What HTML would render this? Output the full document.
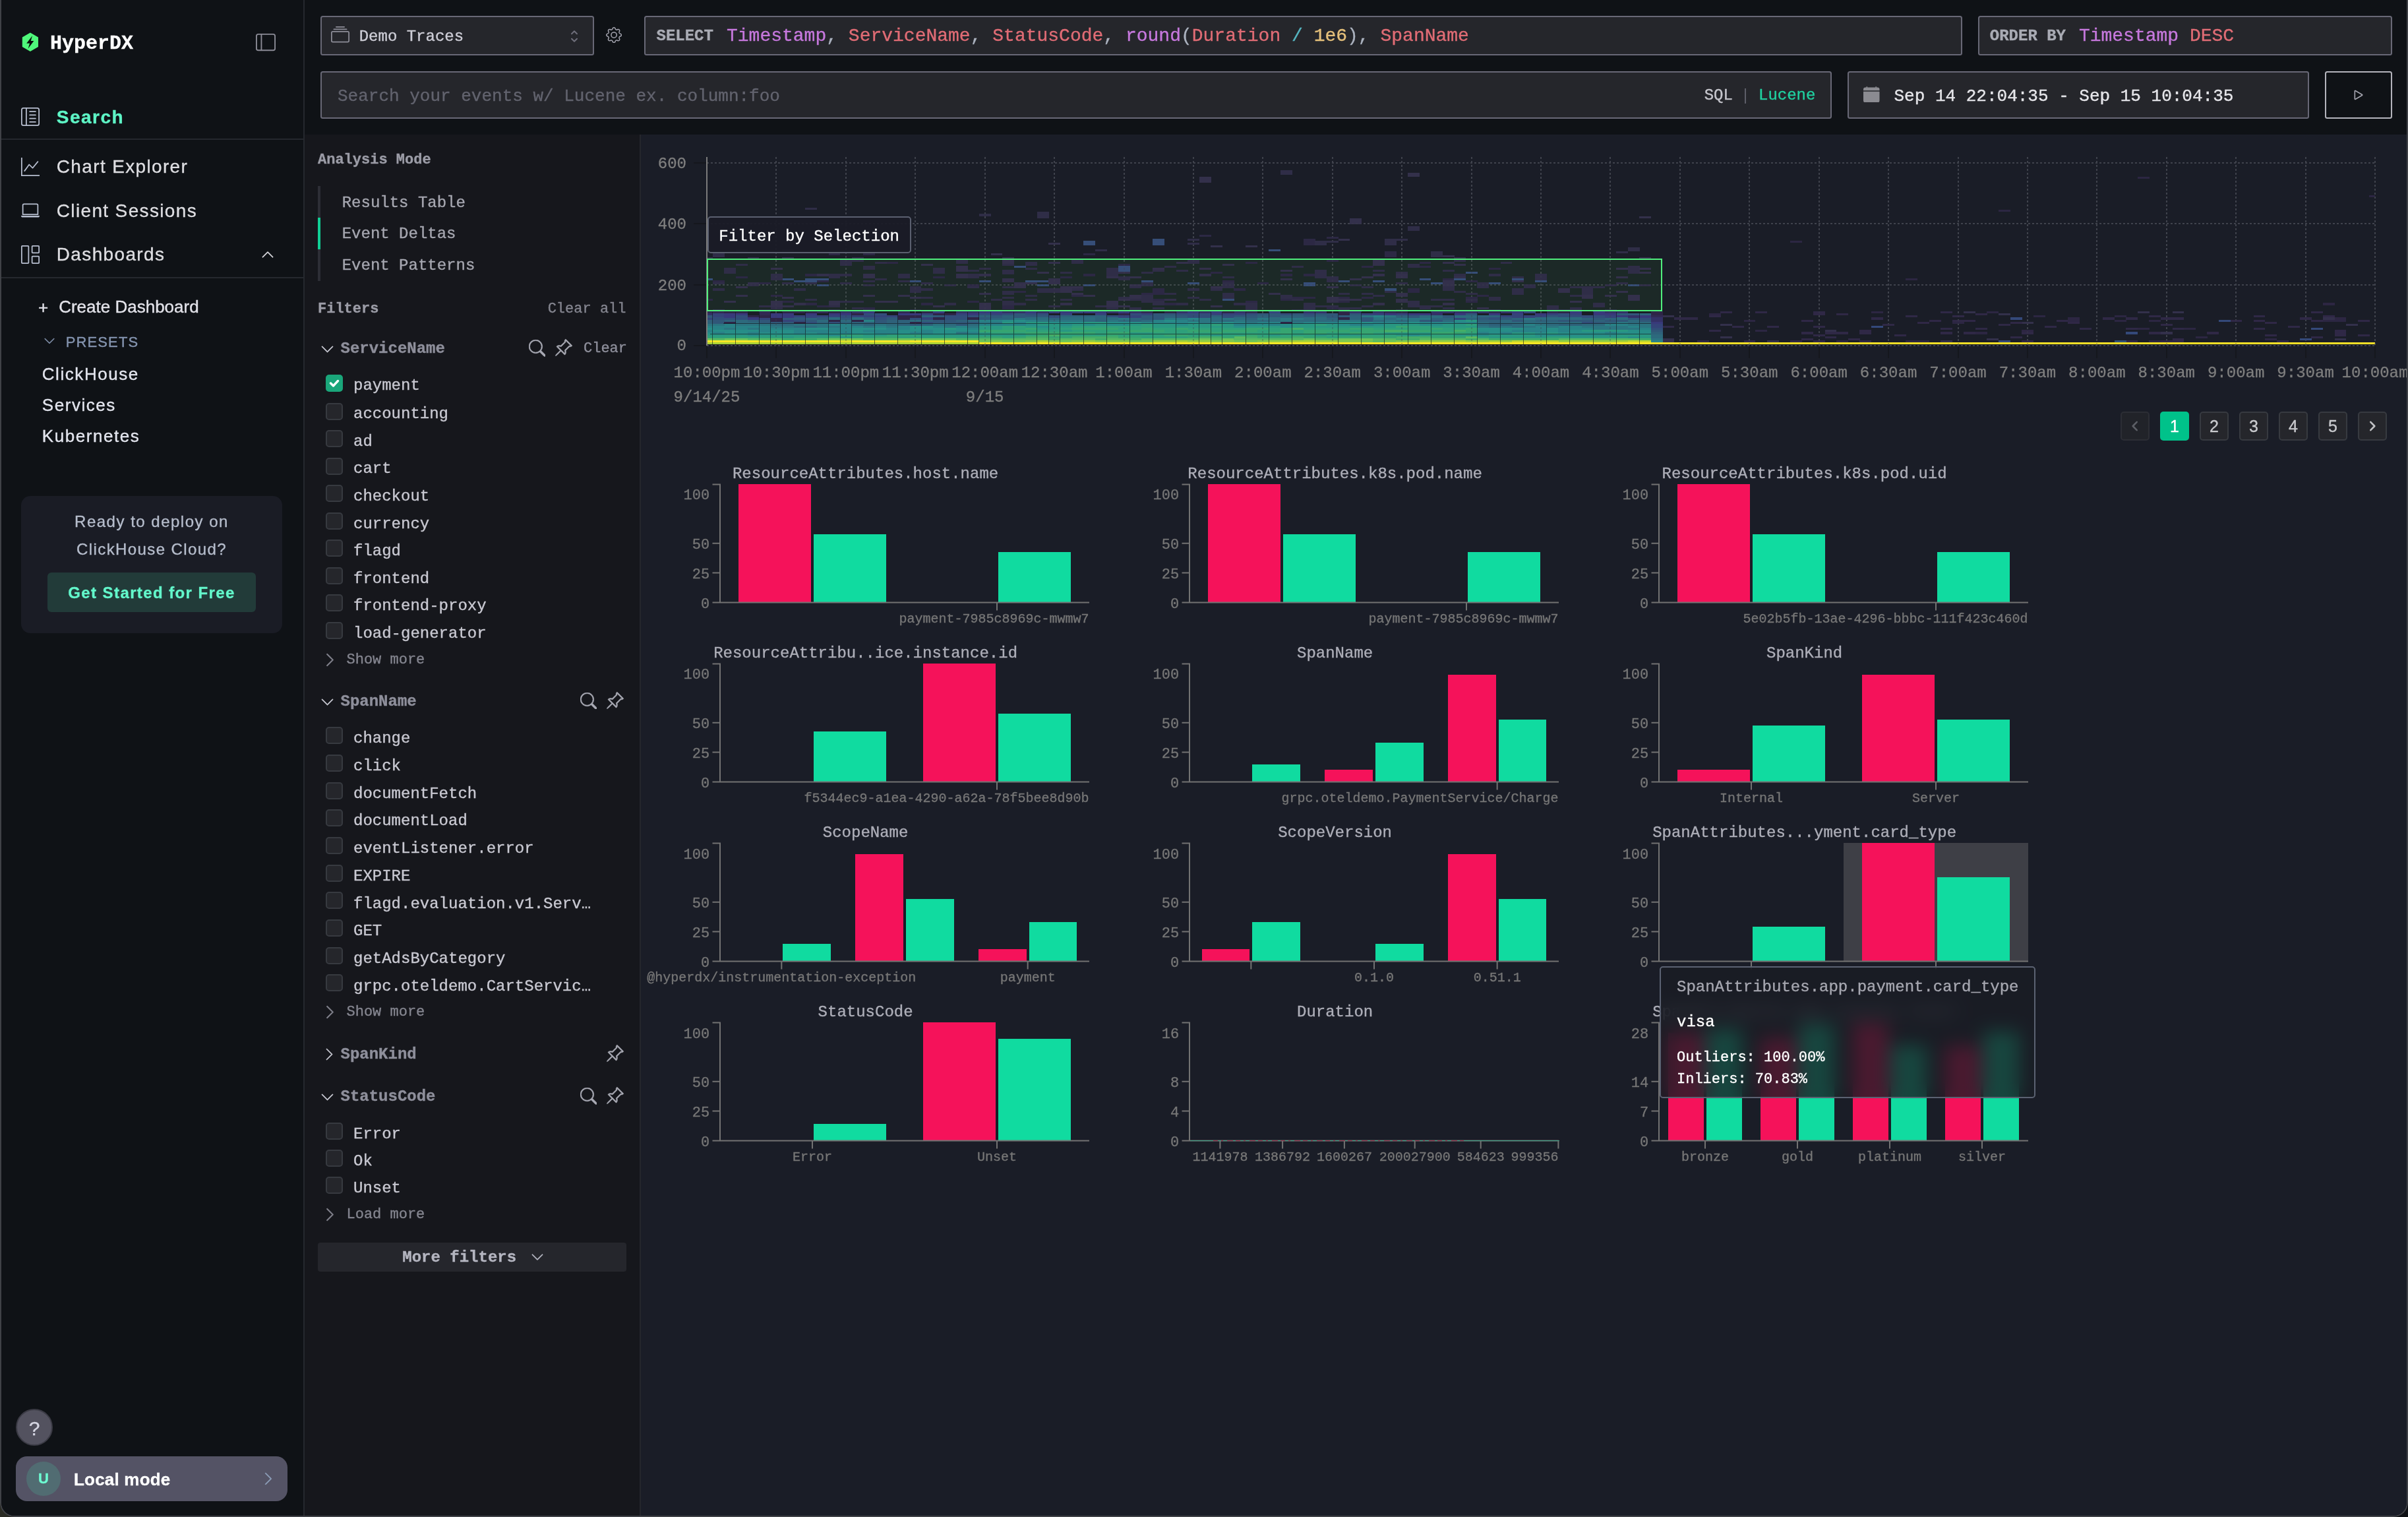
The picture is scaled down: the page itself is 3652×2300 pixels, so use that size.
<!DOCTYPE html>
<html lang="en"><head><meta charset="utf-8"><title>HyperDX - Search</title>
<style>
*{box-sizing:border-box;margin:0;padding:0}
html,body{width:3652px;height:2300px;overflow:hidden;background:#15161a}
#win{position:absolute;left:0;top:0;width:3652px;height:2300px;background:#0f1216;border:2px solid #404247;border-top:none;border-radius:0 0 22px 22px;overflow:hidden}
#in{position:absolute;left:-2px;top:0;width:3652px;height:2300px;will-change:transform}
.a{position:absolute;display:block}
.t{position:absolute;white-space:pre;line-height:1;-webkit-text-stroke:0.35px currentColor}
.m{font-family:"Liberation Mono","DejaVu Sans Mono",monospace}
.s{font-family:"Liberation Sans","DejaVu Sans",sans-serif}
.cb{position:absolute;width:26px;height:26px;border-radius:5px;background:#25262b;border:2px solid #373a40}
.box{position:absolute;background:#25262b;border:2px solid #686876;border-radius:3.5px}
</style></head>
<body><div style="position:absolute;left:0;top:2270px;width:30px;height:30px;background:#2a2b24"></div><div style="position:absolute;left:3622px;top:2270px;width:30px;height:30px;background:#0e1014"></div><div id="win"><div id="in">
<div class="a" style="left:2.00px;top:0.00px;width:458.00px;height:2300.00px;background:#0f1216;"></div>
<div class="a" style="left:460.00px;top:0.00px;width:2.00px;height:2300.00px;background:#25282e;"></div>
<div class="a" style="left:462.00px;top:0.00px;width:3188.00px;height:204.00px;background:#0f1216;"></div>
<div class="a" style="left:462.00px;top:204.00px;width:508.00px;height:2096.00px;background:#16171c;"></div>
<div class="a" style="left:970.00px;top:204.00px;width:2.00px;height:2096.00px;background:#25262c;"></div>
<div class="a" style="left:972.00px;top:204.00px;width:2678.00px;height:2096.00px;background:#1a1d27;"></div>
<svg class="a" style="left:32px;top:48px" width="28" height="32" viewBox="0 0 28 32"><polygon points="13.9,1.6 26,8.6 26,23 13.9,30 1.8,23 1.8,8.6" fill="#4ff87b"/><polygon points="17,6.2 8.2,17.8 13,17.8 10.6,25.8 19.4,14 14.8,14" fill="#0b0d0c"/></svg>
<div class="t m" style="top:50.62px;font-size:30px;color:#ffffff;left:76.00px;font-weight:700;">HyperDX</div>
<svg class="a" style="left:388.00px;top:47.00px;height:34px;" width="30" height="30" viewBox="0 -1 16 18" fill="#8b8b96" color="#8b8b96"><path d="M0 3a2 2 0 0 1 2-2h12a2 2 0 0 1 2 2v10a2 2 0 0 1-2 2H2a2 2 0 0 1-2-2V3zm5-1v12h9a1 1 0 0 0 1-1V3a1 1 0 0 0-1-1H5zM4 2H2a1 1 0 0 0-1 1v10a1 1 0 0 0 1 1h2V2z"/></svg>
<svg class="a" style="left:32.00px;top:163.00px;" width="28" height="28" viewBox="0 0 16 16" fill="#b8bfd0" color="#b8bfd0"><path d="M12.5 3a.5.5 0 0 1 0 1h-5a.5.5 0 0 1 0-1h5zm0 3a.5.5 0 0 1 0 1h-5a.5.5 0 0 1 0-1h5zm.5 3.5a.5.5 0 0 0-.5-.5h-5a.5.5 0 0 0 0 1h5a.5.5 0 0 0 .5-.5zm-.5 2.5a.5.5 0 0 1 0 1h-5a.5.5 0 0 1 0-1h5z"/><path d="M16 2a2 2 0 0 0-2-2H2a2 2 0 0 0-2 2v12a2 2 0 0 0 2 2h12a2 2 0 0 0 2-2V2zM4 1v14H2a1 1 0 0 1-1-1V2a1 1 0 0 1 1-1h2zm1 0h9a1 1 0 0 1 1 1v12a1 1 0 0 1-1 1H5V1z"/></svg>
<div class="t s" style="top:163.69px;font-size:28px;color:#5ef5c6;left:85.80px;font-weight:700;letter-spacing:1.5px;">Search</div>
<div class="a" style="left:2.00px;top:210.00px;width:458.00px;height:2.00px;background:#25282e;"></div>
<svg class="a" style="left:32.00px;top:239.00px;" width="28" height="28" viewBox="0 0 16 16" fill="#b8bfd0" color="#b8bfd0"><path fill-rule="evenodd" d="M0 0h1v15h15v1H0V0Zm14.817 3.113a.5.5 0 0 1 .07.704l-4.5 5.5a.5.5 0 0 1-.74.037L7.06 6.767l-3.656 5.027a.5.5 0 0 1-.808-.588l4-5.5a.5.5 0 0 1 .758-.06l2.609 2.61 4.15-5.073a.5.5 0 0 1 .704-.07Z"/></svg>
<div class="t s" style="top:239.19px;font-size:28px;color:#dedee2;left:85.80px;letter-spacing:1.35px;">Chart Explorer</div>
<svg class="a" style="left:32.00px;top:305.00px;" width="28" height="28" viewBox="0 0 16 16" fill="#b8bfd0" color="#b8bfd0"><path d="M13.5 3a.5.5 0 0 1 .5.5V11H2V3.5a.5.5 0 0 1 .5-.5h11zm-11-1A1.5 1.5 0 0 0 1 3.5V12h14V3.5A1.5 1.5 0 0 0 13.5 2h-11zM0 12.5h16a1.5 1.5 0 0 1-1.5 1.5h-13A1.5 1.5 0 0 1 0 12.5z"/></svg>
<div class="t s" style="top:305.69px;font-size:28px;color:#dedee2;left:85.80px;letter-spacing:1.35px;">Client Sessions</div>
<svg class="a" style="left:32.00px;top:372.00px;" width="28" height="28" viewBox="0 0 16 16" fill="#b8bfd0" color="#b8bfd0"><path d="M6 1H1v14h5V1zm9 0h-5v5h5V1zm0 9v5h-5v-5h5zM0 1a1 1 0 0 1 1-1h5a1 1 0 0 1 1 1v14a1 1 0 0 1-1 1H1a1 1 0 0 1-1-1V1zm9 0a1 1 0 0 1 1-1h5a1 1 0 0 1 1 1v5a1 1 0 0 1-1 1h-5a1 1 0 0 1-1-1V1zm1 8a1 1 0 0 0-1 1v5a1 1 0 0 0 1 1h5a1 1 0 0 0 1-1v-5a1 1 0 0 0-1-1h-5z"/></svg>
<div class="t s" style="top:372.09px;font-size:28px;color:#dedee2;left:85.80px;letter-spacing:1.35px;">Dashboards</div>
<svg class="a" style="left:396.00px;top:376.00px;" width="20" height="20" viewBox="0 0 16 16" fill="#d8d8de" color="#d8d8de"><path stroke="currentColor" stroke-width="0.5" fill-rule="evenodd" d="M7.646 4.646a.5.5 0 0 1 .708 0l6 6a.5.5 0 0 1-.708.708L8 5.707l-5.646 5.647a.5.5 0 0 1-.708-.708l6-6z"/></svg>
<div class="a" style="left:2.00px;top:420.00px;width:458.00px;height:2.00px;background:#25282e;"></div>
<div class="t s" style="top:452.99px;font-size:26px;color:#e3e3ea;left:58.00px;">+</div>
<div class="t s" style="top:452.49px;font-size:26px;color:#e3e3ea;left:89.20px;">Create Dashboard</div>
<svg class="a" style="left:66.00px;top:508.00px;" width="18" height="18" viewBox="0 0 16 16" fill="#8595b0" color="#8595b0"><path stroke="currentColor" stroke-width="0.5" fill-rule="evenodd" d="M1.646 4.646a.5.5 0 0 1 .708 0L8 10.293l5.646-5.647a.5.5 0 0 1 .708.708l-6 6a.5.5 0 0 1-.708 0l-6-6a.5.5 0 0 1 0-.708z"/></svg>
<div class="t s" style="top:507.67px;font-size:22px;color:#8595b0;left:99.80px;letter-spacing:1.1px;">PRESETS</div>
<div class="t s" style="top:554.19px;font-size:26px;color:#e3e5ee;left:63.80px;letter-spacing:1.55px;">ClickHouse</div>
<div class="t s" style="top:600.69px;font-size:26px;color:#e3e5ee;left:63.80px;letter-spacing:1.55px;">Services</div>
<div class="t s" style="top:647.59px;font-size:26px;color:#e3e5ee;left:63.80px;letter-spacing:1.55px;">Kubernetes</div>
<div class="a" style="left:32.00px;top:752.00px;width:396.00px;height:208.00px;background:#1a1c25;border-radius:14px;"></div>
<div class="t s" style="top:778.68px;font-size:24px;color:#b6bdcc;left:230.00px;transform:translateX(-50%);letter-spacing:1.5px;">Ready to deploy on</div>
<div class="t s" style="top:820.68px;font-size:24px;color:#b6bdcc;left:230.00px;transform:translateX(-50%);letter-spacing:1.4px;">ClickHouse Cloud?</div>
<div class="a" style="left:72.00px;top:868.00px;width:316.00px;height:60.00px;background:#223b39;border-radius:6px;"></div>
<div class="t s" style="top:886.98px;font-size:24px;color:#63f7cb;left:230.00px;transform:translateX(-50%);font-weight:700;letter-spacing:1.4px;">Get Started for Free</div>
<div class="a" style="left:24.00px;top:2136.00px;width:56.00px;height:56.00px;background:#53525f;border-radius:50%;border:2px solid #3b3b45;"></div>
<div class="t s" style="top:2151.10px;font-size:30px;color:#d5d6e2;left:52.00px;transform:translateX(-50%);">?</div>
<div class="a" style="left:24.00px;top:2208.00px;width:412.00px;height:68.00px;background:#545365;border-radius:17px;"></div>
<div class="a" style="left:40.00px;top:2216.00px;width:52.00px;height:52.00px;background:#516c72;border-radius:50%;"></div>
<div class="t s" style="top:2230.87px;font-size:22px;color:#6dfcd2;left:66.00px;transform:translateX(-50%);font-weight:700;">U</div>
<div class="t s" style="top:2230.29px;font-size:26px;color:#ffffff;left:112.00px;font-weight:700;letter-spacing:0.2px;">Local mode</div>
<svg class="a" style="left:396.00px;top:2231.00px;" width="22" height="22" viewBox="0 0 16 16" fill="#8a9bb5" color="#8a9bb5"><path stroke="currentColor" stroke-width="0.5" fill-rule="evenodd" d="M4.646 1.646a.5.5 0 0 1 .708 0l6 6a.5.5 0 0 1 0 .708l-6 6a.5.5 0 0 1-.708-.708L10.293 8 4.646 2.354a.5.5 0 0 1 0-.708z"/></svg>
<div class="box" style="left:486px;top:24px;width:415px;height:60px"></div>
<svg class="a" style="left:502.00px;top:39.00px;" width="28" height="28" viewBox="0 0 16 16" fill="#8d8d98" color="#8d8d98"><path d="M2.5 3.5a.5.5 0 0 1 0-1h11a.5.5 0 0 1 0 1h-11zm2-2a.5.5 0 0 1 0-1h7a.5.5 0 0 1 0 1h-7zM0 13a1.5 1.5 0 0 0 1.5 1.5h13A1.5 1.5 0 0 0 16 13V6a1.5 1.5 0 0 0-1.5-1.5h-13A1.5 1.5 0 0 0 0 6v7zm1.5.5A.5.5 0 0 1 1 13V6a.5.5 0 0 1 .5-.5h13a.5.5 0 0 1 .5.5v7a.5.5 0 0 1-.5.5h-13z"/></svg>
<div class="t m" style="top:43.91px;font-size:24px;color:#cdcdd6;left:544.70px;">Demo Traces</div>
<svg class="a" style="left:862px;top:42px" width="18" height="26" viewBox="0 0 18 26" fill="none" stroke="#6e6e7a" stroke-width="2" stroke-linecap="round" stroke-linejoin="round"><polyline points="5,9.2 9,5.2 13,9.2"/><polyline points="5,16.8 9,20.8 13,16.8"/></svg>
<svg class="a" style="left:919.00px;top:41.30px;" width="24.2" height="24.2" viewBox="0 0 16 16" fill="#a2a2ad" color="#a2a2ad"><path d="M8 4.754a3.246 3.246 0 1 0 0 6.492 3.246 3.246 0 0 0 0-6.492zM5.754 8a2.246 2.246 0 1 1 4.492 0 2.246 2.246 0 0 1-4.492 0z"/><path d="M9.796 1.343c-.527-1.79-3.065-1.79-3.592 0l-.094.319a.873.873 0 0 1-1.255.52l-.292-.16c-1.64-.892-3.433.902-2.54 2.541l.159.292a.873.873 0 0 1-.52 1.255l-.319.094c-1.79.527-1.79 3.065 0 3.592l.319.094a.873.873 0 0 1 .52 1.255l-.16.292c-.892 1.64.901 3.434 2.541 2.54l.292-.159a.873.873 0 0 1 1.255.52l.094.319c.527 1.79 3.065 1.79 3.592 0l.094-.319a.873.873 0 0 1 1.255-.52l.292.16c1.64.893 3.434-.902 2.54-2.541l-.159-.292a.873.873 0 0 1 .52-1.255l.319-.094c1.79-.527 1.79-3.065 0-3.592l-.319-.094a.873.873 0 0 1-.52-1.255l.16-.292c.893-1.64-.902-3.433-2.541-2.54l-.292.159a.873.873 0 0 1-1.255-.52l-.094-.319zm-2.633.283c.246-.835 1.428-.835 1.674 0l.094.319a1.873 1.873 0 0 0 2.693 1.115l.291-.16c.764-.415 1.6.42 1.184 1.185l-.159.292a1.873 1.873 0 0 0 1.116 2.692l.318.094c.835.246.835 1.428 0 1.674l-.319.094a1.873 1.873 0 0 0-1.115 2.693l.16.291c.415.764-.42 1.6-1.185 1.184l-.291-.159a1.873 1.873 0 0 0-2.693 1.116l-.094.318c-.246.835-1.428.835-1.674 0l-.094-.319a1.873 1.873 0 0 0-2.692-1.115l-.292.16c-.764.415-1.6-.42-1.184-1.185l.159-.291A1.873 1.873 0 0 0 1.945 8.93l-.319-.094c-.835-.246-.835-1.428 0-1.674l.319-.094A1.873 1.873 0 0 0 3.06 4.377l-.16-.292c-.415-.764.42-1.6 1.185-1.184l.292.159a1.873 1.873 0 0 0 2.692-1.115l.094-.319z"/></svg>
<div class="box" style="left:977px;top:24px;width:1999px;height:60px"></div>
<div class="t m" style="top:43.11px;font-size:24px;color:#a9abb4;left:995.50px;font-weight:700;">SELECT</div>
<div class="t m" style="top:41.05px;font-size:28px;color:#abb2bf;left:1102.00px;"><span style="color:#c678dd">Timestamp</span><span style="color:#abb2bf">, </span><span style="color:#e06c75">ServiceName</span><span style="color:#abb2bf">, </span><span style="color:#e06c75">StatusCode</span><span style="color:#abb2bf">, </span><span style="color:#c678dd">round</span><span style="color:#abb2bf">(</span><span style="color:#e06c75">Duration</span> <span style="color:#56b6c2">/</span> <span style="color:#e5c07b">1e6</span><span style="color:#abb2bf">), </span><span style="color:#e06c75">SpanName</span></div>
<div class="box" style="left:3000px;top:24px;width:628px;height:60px"></div>
<div class="t m" style="top:43.11px;font-size:24px;color:#a9abb4;left:3017.80px;font-weight:700;">ORDER BY</div>
<div class="t m" style="top:41.05px;font-size:28px;color:#abb2bf;left:3152.90px;"><span style="color:#c678dd">Timestamp</span> <span style="color:#e06c75">DESC</span></div>
<div class="box" style="left:486px;top:108px;width:2292px;height:72px"></div>
<div class="t m" style="top:133.08px;font-size:26px;color:#62636e;left:512.00px;">Search your events w/ Lucene ex. column:foo</div>
<div class="t m" style="top:132.51px;font-size:24px;color:#c6c6cd;left:2584.70px;">SQL</div>
<div class="a" style="left:2645.50px;top:134.00px;width:2.00px;height:23.00px;background:#5d5e68;"></div>
<div class="t m" style="top:132.51px;font-size:24px;color:#20d1a0;left:2667.00px;">Lucene</div>
<div class="box" style="left:2802px;top:108px;width:700px;height:72px"></div>
<svg class="a" style="left:2826.00px;top:130.50px;" width="24.5" height="24.5" viewBox="0 0 16 16" fill="#8b8b91" color="#8b8b91"><path d="M3.5 0a.5.5 0 0 1 .5.5V1h8V.5a.5.5 0 0 1 1 0V1h1a2 2 0 0 1 2 2v11a2 2 0 0 1-2 2H2a2 2 0 0 1-2-2V5h16V4H0V3a2 2 0 0 1 2-2h1V.5a.5.5 0 0 1 .5-.5z"/></svg>
<div class="t m" style="top:132.78px;font-size:26px;color:#e6e6ea;left:2872.50px;">Sep 14 22:04:35 - Sep 15 10:04:35</div>
<div class="box" style="left:3526px;top:108px;width:102px;height:72px;background:#0f1216;border-color:#b4b4bc"></div>
<svg class="a" style="left:3564.00px;top:131.00px;" width="26" height="26" viewBox="0 0 16 16" fill="#a4a4ae" color="#a4a4ae"><path d="M10.804 8 5 4.633v6.734L10.804 8zm.792-.696a.802.802 0 0 1 0 1.392l-6.363 3.692C4.713 12.69 4 12.345 4 11.692V4.308c0-.653.713-.998 1.233-.696l6.363 3.692z"/></svg>
<div class="t m" style="top:231.65px;font-size:22px;color:#9b9ca6;left:482.00px;font-weight:700;">Analysis Mode</div>
<div class="a" style="left:482.00px;top:282.00px;width:4.00px;height:144.00px;background:#2d2e36;"></div>
<div class="a" style="left:482.00px;top:330.00px;width:4.00px;height:48.00px;background:#10cf95;"></div>
<div class="t m" style="top:295.71px;font-size:24px;color:#a6a7b0;left:518.70px;">Results Table</div>
<div class="t m" style="top:342.81px;font-size:24px;color:#a6a7b0;left:518.70px;">Event Deltas</div>
<div class="t m" style="top:390.71px;font-size:24px;color:#a6a7b0;left:518.70px;">Event Patterns</div>
<div class="t m" style="top:457.85px;font-size:22px;color:#9b9ca6;left:482.00px;font-weight:700;">Filters</div>
<div class="t m" style="top:457.85px;font-size:22px;color:#84858f;right:2702.50px;">Clear all</div>
<svg class="a" style="left:486.20px;top:519.20px;" width="21" height="21" viewBox="0 0 16 16" fill="#c2c3cc" color="#c2c3cc"><path stroke="currentColor" stroke-width="0.5" fill-rule="evenodd" d="M1.646 4.646a.5.5 0 0 1 .708 0L8 10.293l5.646-5.647a.5.5 0 0 1 .708.708l-6 6a.5.5 0 0 1-.708 0l-6-6a.5.5 0 0 1 0-.708z"/></svg>
<div class="t m" style="top:517.21px;font-size:24px;color:#8e8f9b;left:516.50px;font-weight:700;">ServiceName</div>
<div class="t m" style="top:517.85px;font-size:22px;color:#8e8f9b;left:885.00px;">Clear</div>
<svg class="a" style="left:801.50px;top:515.40px;" width="25.5" height="25.5" viewBox="0 0 16 16" fill="#a9aab4" color="#a9aab4"><path stroke="currentColor" stroke-width="0.35" d="M11.742 10.344a6.5 6.5 0 1 0-1.397 1.398h-.001c.03.04.062.078.098.115l3.85 3.85a1 1 0 0 0 1.415-1.414l-3.85-3.85a1.007 1.007 0 0 0-.115-.1zM12 6.5a5.5 5.5 0 1 1-11 0 5.5 5.5 0 0 1 11 0z"/></svg>
<svg class="a" style="left:840.00px;top:513.00px;" width="29" height="29" viewBox="0 0 16 16" fill="#a9aab4" color="#a9aab4"><path stroke="currentColor" stroke-width="0.25" d="M9.828.722a.5.5 0 0 1 .354.146l4.95 4.95a.5.5 0 0 1 0 .707c-.48.48-1.072.588-1.503.588-.177 0-.335-.018-.46-.039l-3.134 3.134a5.927 5.927 0 0 1 .16 1.013c.046.702-.032 1.687-.72 2.375a.5.5 0 0 1-.707 0l-2.829-2.828-3.182 3.182c-.195.195-1.219.902-1.414.707-.195-.195.512-1.22.707-1.414l3.182-3.182-2.828-2.829a.5.5 0 0 1 0-.707c.688-.688 1.673-.767 2.375-.72a5.922 5.922 0 0 1 1.013.16l3.134-3.133a2.772 2.772 0 0 1-.04-.461c0-.43.108-1.022.589-1.503a.5.5 0 0 1 .353-.146zm.122 2.112v-.002.002zm0-.002v.002a.5.5 0 0 1-.122.51L6.293 6.878a.5.5 0 0 1-.511.12H5.78l-.014-.004a4.507 4.507 0 0 0-.288-.076 4.922 4.922 0 0 0-.765-.116c-.422-.028-.836.008-1.175.15l5.51 5.509c.141-.34.177-.753.149-1.175a4.924 4.924 0 0 0-.192-1.054l-.004-.013v-.001a.5.5 0 0 1 .12-.512l3.536-3.535a.5.5 0 0 1 .532-.115l.096.022c.087.017.208.034.344.034.114 0 .23-.011.343-.04L9.927 2.028c-.029.113-.04.23-.04.343a1.779 1.779 0 0 0 .062.46z"/></svg>
<div class="cb" style="left:494px;top:568.00px;background:#1aa67a;border-color:#1aa67a"><svg class="a" style="left:2px;top:3px" width="18" height="16" viewBox="0 0 18 16" fill="none" stroke="#fff" stroke-width="3.4" stroke-linecap="round" stroke-linejoin="round"><polyline points="3.5,8 7.5,12 14.5,4.5"/></svg></div>
<div class="t m" style="top:572.91px;font-size:24px;color:#c9c9d2;left:536.00px;">payment</div>
<div class="cb" style="left:494px;top:610.60px"></div>
<div class="t m" style="top:616.31px;font-size:24px;color:#c9c9d2;left:536.00px;">accounting</div>
<div class="cb" style="left:494px;top:652.15px"></div>
<div class="t m" style="top:657.88px;font-size:24px;color:#c9c9d2;left:536.00px;">ad</div>
<div class="cb" style="left:494px;top:693.70px"></div>
<div class="t m" style="top:699.45px;font-size:24px;color:#c9c9d2;left:536.00px;">cart</div>
<div class="cb" style="left:494px;top:735.25px"></div>
<div class="t m" style="top:741.02px;font-size:24px;color:#c9c9d2;left:536.00px;">checkout</div>
<div class="cb" style="left:494px;top:776.80px"></div>
<div class="t m" style="top:782.59px;font-size:24px;color:#c9c9d2;left:536.00px;">currency</div>
<div class="cb" style="left:494px;top:818.35px"></div>
<div class="t m" style="top:824.16px;font-size:24px;color:#c9c9d2;left:536.00px;">flagd</div>
<div class="cb" style="left:494px;top:859.90px"></div>
<div class="t m" style="top:865.73px;font-size:24px;color:#c9c9d2;left:536.00px;">frontend</div>
<div class="cb" style="left:494px;top:901.45px"></div>
<div class="t m" style="top:907.30px;font-size:24px;color:#c9c9d2;left:536.00px;">frontend-proxy</div>
<div class="cb" style="left:494px;top:943.00px"></div>
<div class="t m" style="top:948.87px;font-size:24px;color:#c9c9d2;left:536.00px;">load-generator</div>
<svg class="a" style="left:489.00px;top:989.00px;" width="23" height="23" viewBox="0 0 16 16" fill="#84858f" color="#84858f"><path stroke="currentColor" stroke-width="0.5" fill-rule="evenodd" d="M4.646 1.646a.5.5 0 0 1 .708 0l6 6a.5.5 0 0 1 0 .708l-6 6a.5.5 0 0 1-.708-.708L10.293 8 4.646 2.354a.5.5 0 0 1 0-.708z"/></svg>
<div class="t m" style="top:989.85px;font-size:22px;color:#84858f;left:525.50px;">Show more</div>
<svg class="a" style="left:486.20px;top:1053.70px;" width="21" height="21" viewBox="0 0 16 16" fill="#c2c3cc" color="#c2c3cc"><path stroke="currentColor" stroke-width="0.5" fill-rule="evenodd" d="M1.646 4.646a.5.5 0 0 1 .708 0L8 10.293l5.646-5.647a.5.5 0 0 1 .708.708l-6 6a.5.5 0 0 1-.708 0l-6-6a.5.5 0 0 1 0-.708z"/></svg>
<div class="t m" style="top:1051.71px;font-size:24px;color:#8e8f9b;left:516.50px;font-weight:700;">SpanName</div>
<svg class="a" style="left:879.50px;top:1049.90px;" width="25.5" height="25.5" viewBox="0 0 16 16" fill="#a9aab4" color="#a9aab4"><path stroke="currentColor" stroke-width="0.35" d="M11.742 10.344a6.5 6.5 0 1 0-1.397 1.398h-.001c.03.04.062.078.098.115l3.85 3.85a1 1 0 0 0 1.415-1.414l-3.85-3.85a1.007 1.007 0 0 0-.115-.1zM12 6.5a5.5 5.5 0 1 1-11 0 5.5 5.5 0 0 1 11 0z"/></svg>
<svg class="a" style="left:918.00px;top:1047.50px;" width="29" height="29" viewBox="0 0 16 16" fill="#a9aab4" color="#a9aab4"><path stroke="currentColor" stroke-width="0.25" d="M9.828.722a.5.5 0 0 1 .354.146l4.95 4.95a.5.5 0 0 1 0 .707c-.48.48-1.072.588-1.503.588-.177 0-.335-.018-.46-.039l-3.134 3.134a5.927 5.927 0 0 1 .16 1.013c.046.702-.032 1.687-.72 2.375a.5.5 0 0 1-.707 0l-2.829-2.828-3.182 3.182c-.195.195-1.219.902-1.414.707-.195-.195.512-1.22.707-1.414l3.182-3.182-2.828-2.829a.5.5 0 0 1 0-.707c.688-.688 1.673-.767 2.375-.72a5.922 5.922 0 0 1 1.013.16l3.134-3.133a2.772 2.772 0 0 1-.04-.461c0-.43.108-1.022.589-1.503a.5.5 0 0 1 .353-.146zm.122 2.112v-.002.002zm0-.002v.002a.5.5 0 0 1-.122.51L6.293 6.878a.5.5 0 0 1-.511.12H5.78l-.014-.004a4.507 4.507 0 0 0-.288-.076 4.922 4.922 0 0 0-.765-.116c-.422-.028-.836.008-1.175.15l5.51 5.509c.141-.34.177-.753.149-1.175a4.924 4.924 0 0 0-.192-1.054l-.004-.013v-.001a.5.5 0 0 1 .12-.512l3.536-3.535a.5.5 0 0 1 .532-.115l.096.022c.087.017.208.034.344.034.114 0 .23-.011.343-.04L9.927 2.028c-.029.113-.04.23-.04.343a1.779 1.779 0 0 0 .062.46z"/></svg>
<div class="cb" style="left:494px;top:1102.20px"></div>
<div class="t m" style="top:1108.31px;font-size:24px;color:#c9c9d2;left:536.00px;">change</div>
<div class="cb" style="left:494px;top:1143.87px"></div>
<div class="t m" style="top:1150.01px;font-size:24px;color:#c9c9d2;left:536.00px;">click</div>
<div class="cb" style="left:494px;top:1185.54px"></div>
<div class="t m" style="top:1191.71px;font-size:24px;color:#c9c9d2;left:536.00px;">documentFetch</div>
<div class="cb" style="left:494px;top:1227.21px"></div>
<div class="t m" style="top:1233.41px;font-size:24px;color:#c9c9d2;left:536.00px;">documentLoad</div>
<div class="cb" style="left:494px;top:1268.88px"></div>
<div class="t m" style="top:1275.11px;font-size:24px;color:#c9c9d2;left:536.00px;">eventListener.error</div>
<div class="cb" style="left:494px;top:1310.55px"></div>
<div class="t m" style="top:1316.81px;font-size:24px;color:#c9c9d2;left:536.00px;">EXPIRE</div>
<div class="cb" style="left:494px;top:1352.22px"></div>
<div class="t m" style="top:1358.51px;font-size:24px;color:#c9c9d2;left:536.00px;">flagd.evaluation.v1.Serv…</div>
<div class="cb" style="left:494px;top:1393.89px"></div>
<div class="t m" style="top:1400.21px;font-size:24px;color:#c9c9d2;left:536.00px;">GET</div>
<div class="cb" style="left:494px;top:1435.56px"></div>
<div class="t m" style="top:1441.91px;font-size:24px;color:#c9c9d2;left:536.00px;">getAdsByCategory</div>
<div class="cb" style="left:494px;top:1477.23px"></div>
<div class="t m" style="top:1483.61px;font-size:24px;color:#c9c9d2;left:536.00px;">grpc.oteldemo.CartServic…</div>
<svg class="a" style="left:489.00px;top:1523.10px;" width="23" height="23" viewBox="0 0 16 16" fill="#84858f" color="#84858f"><path stroke="currentColor" stroke-width="0.5" fill-rule="evenodd" d="M4.646 1.646a.5.5 0 0 1 .708 0l6 6a.5.5 0 0 1 0 .708l-6 6a.5.5 0 0 1-.708-.708L10.293 8 4.646 2.354a.5.5 0 0 1 0-.708z"/></svg>
<div class="t m" style="top:1523.95px;font-size:22px;color:#84858f;left:525.50px;">Show more</div>
<svg class="a" style="left:488.50px;top:1588.40px;" width="21" height="21" viewBox="0 0 16 16" fill="#c2c3cc" color="#c2c3cc"><path stroke="currentColor" stroke-width="0.5" fill-rule="evenodd" d="M4.646 1.646a.5.5 0 0 1 .708 0l6 6a.5.5 0 0 1 0 .708l-6 6a.5.5 0 0 1-.708-.708L10.293 8 4.646 2.354a.5.5 0 0 1 0-.708z"/></svg>
<div class="t m" style="top:1586.71px;font-size:24px;color:#8e8f9b;left:516.50px;font-weight:700;">SpanKind</div>
<svg class="a" style="left:918.00px;top:1582.50px;" width="29" height="29" viewBox="0 0 16 16" fill="#a9aab4" color="#a9aab4"><path stroke="currentColor" stroke-width="0.25" d="M9.828.722a.5.5 0 0 1 .354.146l4.95 4.95a.5.5 0 0 1 0 .707c-.48.48-1.072.588-1.503.588-.177 0-.335-.018-.46-.039l-3.134 3.134a5.927 5.927 0 0 1 .16 1.013c.046.702-.032 1.687-.72 2.375a.5.5 0 0 1-.707 0l-2.829-2.828-3.182 3.182c-.195.195-1.219.902-1.414.707-.195-.195.512-1.22.707-1.414l3.182-3.182-2.828-2.829a.5.5 0 0 1 0-.707c.688-.688 1.673-.767 2.375-.72a5.922 5.922 0 0 1 1.013.16l3.134-3.133a2.772 2.772 0 0 1-.04-.461c0-.43.108-1.022.589-1.503a.5.5 0 0 1 .353-.146zm.122 2.112v-.002.002zm0-.002v.002a.5.5 0 0 1-.122.51L6.293 6.878a.5.5 0 0 1-.511.12H5.78l-.014-.004a4.507 4.507 0 0 0-.288-.076 4.922 4.922 0 0 0-.765-.116c-.422-.028-.836.008-1.175.15l5.51 5.509c.141-.34.177-.753.149-1.175a4.924 4.924 0 0 0-.192-1.054l-.004-.013v-.001a.5.5 0 0 1 .12-.512l3.536-3.535a.5.5 0 0 1 .532-.115l.096.022c.087.017.208.034.344.034.114 0 .23-.011.343-.04L9.927 2.028c-.029.113-.04.23-.04.343a1.779 1.779 0 0 0 .062.46z"/></svg>
<svg class="a" style="left:486.20px;top:1653.00px;" width="21" height="21" viewBox="0 0 16 16" fill="#c2c3cc" color="#c2c3cc"><path stroke="currentColor" stroke-width="0.5" fill-rule="evenodd" d="M1.646 4.646a.5.5 0 0 1 .708 0L8 10.293l5.646-5.647a.5.5 0 0 1 .708.708l-6 6a.5.5 0 0 1-.708 0l-6-6a.5.5 0 0 1 0-.708z"/></svg>
<div class="t m" style="top:1651.01px;font-size:24px;color:#8e8f9b;left:516.50px;font-weight:700;">StatusCode</div>
<svg class="a" style="left:879.50px;top:1649.20px;" width="25.5" height="25.5" viewBox="0 0 16 16" fill="#a9aab4" color="#a9aab4"><path stroke="currentColor" stroke-width="0.35" d="M11.742 10.344a6.5 6.5 0 1 0-1.397 1.398h-.001c.03.04.062.078.098.115l3.85 3.85a1 1 0 0 0 1.415-1.414l-3.85-3.85a1.007 1.007 0 0 0-.115-.1zM12 6.5a5.5 5.5 0 1 1-11 0 5.5 5.5 0 0 1 11 0z"/></svg>
<svg class="a" style="left:918.00px;top:1646.80px;" width="29" height="29" viewBox="0 0 16 16" fill="#a9aab4" color="#a9aab4"><path stroke="currentColor" stroke-width="0.25" d="M9.828.722a.5.5 0 0 1 .354.146l4.95 4.95a.5.5 0 0 1 0 .707c-.48.48-1.072.588-1.503.588-.177 0-.335-.018-.46-.039l-3.134 3.134a5.927 5.927 0 0 1 .16 1.013c.046.702-.032 1.687-.72 2.375a.5.5 0 0 1-.707 0l-2.829-2.828-3.182 3.182c-.195.195-1.219.902-1.414.707-.195-.195.512-1.22.707-1.414l3.182-3.182-2.828-2.829a.5.5 0 0 1 0-.707c.688-.688 1.673-.767 2.375-.72a5.922 5.922 0 0 1 1.013.16l3.134-3.133a2.772 2.772 0 0 1-.04-.461c0-.43.108-1.022.589-1.503a.5.5 0 0 1 .353-.146zm.122 2.112v-.002.002zm0-.002v.002a.5.5 0 0 1-.122.51L6.293 6.878a.5.5 0 0 1-.511.12H5.78l-.014-.004a4.507 4.507 0 0 0-.288-.076 4.922 4.922 0 0 0-.765-.116c-.422-.028-.836.008-1.175.15l5.51 5.509c.141-.34.177-.753.149-1.175a4.924 4.924 0 0 0-.192-1.054l-.004-.013v-.001a.5.5 0 0 1 .12-.512l3.536-3.535a.5.5 0 0 1 .532-.115l.096.022c.087.017.208.034.344.034.114 0 .23-.011.343-.04L9.927 2.028c-.029.113-.04.23-.04.343a1.779 1.779 0 0 0 .062.46z"/></svg>
<div class="cb" style="left:494px;top:1701.60px"></div>
<div class="t m" style="top:1707.71px;font-size:24px;color:#c9c9d2;left:536.00px;">Error</div>
<div class="cb" style="left:494px;top:1742.95px"></div>
<div class="t m" style="top:1749.06px;font-size:24px;color:#c9c9d2;left:536.00px;">Ok</div>
<div class="cb" style="left:494px;top:1784.30px"></div>
<div class="t m" style="top:1790.41px;font-size:24px;color:#c9c9d2;left:536.00px;">Unset</div>
<svg class="a" style="left:489.00px;top:1829.70px;" width="23" height="23" viewBox="0 0 16 16" fill="#84858f" color="#84858f"><path stroke="currentColor" stroke-width="0.5" fill-rule="evenodd" d="M4.646 1.646a.5.5 0 0 1 .708 0l6 6a.5.5 0 0 1 0 .708l-6 6a.5.5 0 0 1-.708-.708L10.293 8 4.646 2.354a.5.5 0 0 1 0-.708z"/></svg>
<div class="t m" style="top:1830.55px;font-size:22px;color:#84858f;left:525.50px;">Load more</div>
<div class="a" style="left:482.00px;top:1884.00px;width:468.00px;height:44.00px;background:#25262c;border-radius:4px;"></div>
<div class="t m" style="top:1894.61px;font-size:24px;color:#b4b5c0;left:610.30px;font-weight:700;">More filters</div>
<svg class="a" style="left:805.00px;top:1896.00px;" width="20" height="20" viewBox="0 0 16 16" fill="#b4b5c0" color="#b4b5c0"><path stroke="currentColor" stroke-width="0.5" fill-rule="evenodd" d="M1.646 4.646a.5.5 0 0 1 .708 0L8 10.293l5.646-5.647a.5.5 0 0 1 .708.708l-6 6a.5.5 0 0 1-.708 0l-6-6a.5.5 0 0 1 0-.708z"/></svg>
<svg class="a" style="left:972px;top:204px" width="2678" height="470" viewBox="972 204 2678 470" shape-rendering="crispEdges"><path d="M1072.0 246.7H3602.0M1072.0 338.7H3602.0M1072.0 431.7H3602.0M1072.0 524.0H3602.0M1177.4 238V523M1282.8 238V523M1388.3 238V523M1493.7 238V523M1599.1 238V523M1704.5 238V523M1809.9 238V523M1915.3 238V523M2020.8 238V523M2126.2 238V523M2231.6 238V523M2337.0 238V523M2442.4 238V523M2547.8 238V523M2653.3 238V523M2758.7 238V523M2864.1 238V523M2969.5 238V523M3074.9 238V523M3180.3 238V523M3285.8 238V523M3391.2 238V523M3496.6 238V523M3602.0 238V523" stroke="#40434c" stroke-width="2" stroke-dasharray="3 3" fill="none"/><rect x="1073" y="393" width="1446.5" height="78" fill="#3ce632" fill-opacity="0.06"/><path fill="#abd235" d="M1073 519.1h8.1v3.3h-8.1zM1080.8 519.1h17.9v3.3h-17.9zM1098.4 519.1h17.9v3.3h-17.9zM1115.9 519.1h17.9v3.3h-17.9zM1133.5 519.1h17.9v3.3h-17.9zM1151.1 519.1h17.9v3.3h-17.9zM1168.6 519.1h17.9v3.3h-17.9zM1186.2 519.1h17.9v3.3h-17.9zM1203.8 519.1h17.9v3.3h-17.9zM1221.3 519.1h17.9v3.3h-17.9zM1238.9 519.1h17.9v3.3h-17.9zM1256.5 519.1h17.9v3.3h-17.9zM1274 519.1h17.9v3.3h-17.9zM1291.6 519.1h17.9v3.3h-17.9zM1309.2 519.1h17.9v3.3h-17.9zM1326.8 519.1h17.9v3.3h-17.9zM1344.3 519.1h17.9v3.3h-17.9zM1361.9 519.1h17.9v3.3h-17.9zM1379.5 519.1h17.9v3.3h-17.9zM1397 519.1h17.9v3.3h-17.9zM1414.6 519.1h17.9v3.3h-17.9zM1432.2 519.1h17.9v3.3h-17.9zM1449.7 519.1h17.9v3.3h-17.9zM1467.3 519.1h17.9v3.3h-17.9zM1572.7 515.9h17.9v3.3h-17.9zM1783.6 515.9h17.9v3.3h-17.9zM1959.3 515.9h17.9v3.3h-17.9zM1976.8 515.9h17.9v3.3h-17.9zM2205.2 515.9h17.9v3.3h-17.9zM2257.9 515.9h17.9v3.3h-17.9zM2380.9 515.9h17.9v3.3h-17.9zM2398.5 515.9h17.9v3.3h-17.9zM2451.2 515.9h17.9v3.3h-17.9z"/><path fill="#fde725" d="M1073 515.9h8.1v3.3h-8.1zM1080.8 515.9h17.9v3.3h-17.9zM1098.4 515.9h17.9v3.3h-17.9zM1115.9 515.9h17.9v3.3h-17.9zM1133.5 515.9h17.9v3.3h-17.9zM1151.1 515.9h17.9v3.3h-17.9zM1168.6 515.9h17.9v3.3h-17.9zM1186.2 515.9h17.9v3.3h-17.9zM1203.8 515.9h17.9v3.3h-17.9zM1221.3 515.9h17.9v3.3h-17.9zM1238.9 515.9h17.9v3.3h-17.9zM1256.5 515.9h17.9v3.3h-17.9zM1291.6 515.9h17.9v3.3h-17.9zM1309.2 515.9h17.9v3.3h-17.9zM1326.8 515.9h17.9v3.3h-17.9zM1344.3 515.9h17.9v3.3h-17.9zM1379.5 515.9h17.9v3.3h-17.9zM1397 515.9h17.9v3.3h-17.9zM1414.6 515.9h17.9v3.3h-17.9zM1432.2 515.9h17.9v3.3h-17.9zM1449.7 515.9h17.9v3.3h-17.9zM1467.3 515.9h17.9v3.3h-17.9zM1484.9 519.1h17.9v3.3h-17.9zM1502.5 519.1h17.9v3.3h-17.9zM1520 519.1h17.9v3.3h-17.9zM1537.6 519.1h17.9v3.3h-17.9zM1555.2 519.1h17.9v3.3h-17.9zM1572.7 519.1h17.9v3.3h-17.9zM1590.3 519.1h17.9v3.3h-17.9zM1607.9 519.1h17.9v3.3h-17.9zM1625.4 519.1h17.9v3.3h-17.9zM1643 519.1h17.9v3.3h-17.9zM1660.6 519.1h17.9v3.3h-17.9zM1678.1 519.1h17.9v3.3h-17.9zM1695.7 519.1h17.9v3.3h-17.9zM1713.3 519.1h17.9v3.3h-17.9zM1730.9 519.1h17.9v3.3h-17.9zM1748.4 519.1h17.9v3.3h-17.9zM1766 519.1h17.9v3.3h-17.9zM1783.6 519.1h17.9v3.3h-17.9zM1801.1 519.1h17.9v3.3h-17.9zM1818.7 519.1h17.9v3.3h-17.9zM1836.3 519.1h17.9v3.3h-17.9zM1853.8 519.1h17.9v3.3h-17.9zM1871.4 519.1h17.9v3.3h-17.9zM1889 519.1h17.9v3.3h-17.9zM1906.5 519.1h17.9v3.3h-17.9zM1924.1 519.1h17.9v3.3h-17.9zM1941.7 519.1h17.9v3.3h-17.9zM1959.3 519.1h17.9v3.3h-17.9zM1976.8 519.1h17.9v3.3h-17.9zM1994.4 519.1h17.9v3.3h-17.9zM2012 519.1h17.9v3.3h-17.9zM2029.5 519.1h17.9v3.3h-17.9zM2047.1 519.1h17.9v3.3h-17.9zM2064.7 519.1h17.9v3.3h-17.9zM2082.2 519.1h17.9v3.3h-17.9zM2099.8 519.1h17.9v3.3h-17.9zM2117.4 519.1h17.9v3.3h-17.9zM2135 519.1h17.9v3.3h-17.9zM2152.5 519.1h17.9v3.3h-17.9zM2170.1 519.1h17.9v3.3h-17.9zM2187.7 519.1h17.9v3.3h-17.9zM2205.2 519.1h17.9v3.3h-17.9zM2222.8 519.1h17.9v3.3h-17.9zM2240.4 519.1h17.9v3.3h-17.9zM2257.9 519.1h17.9v3.3h-17.9zM2275.5 519.1h17.9v3.3h-17.9zM2293.1 519.1h17.9v3.3h-17.9zM2310.6 519.1h17.9v3.3h-17.9zM2328.2 519.1h17.9v3.3h-17.9zM2345.8 519.1h17.9v3.3h-17.9zM2363.4 519.1h17.9v3.3h-17.9zM2380.9 519.1h17.9v3.3h-17.9zM2398.5 519.1h17.9v3.3h-17.9zM2416.1 519.1h17.9v3.3h-17.9zM2433.6 519.1h17.9v3.3h-17.9zM2451.2 519.1h17.9v3.3h-17.9zM2468.8 519.1h17.9v3.3h-17.9zM2486.3 519.1h17.9v3.3h-17.9z"/><path fill="#71c557" d="M1073 512.8h8.1v3.3h-8.1zM1098.4 512.8h17.9v3.3h-17.9zM1115.9 512.8h17.9v3.3h-17.9zM1256.5 512.8h17.9v3.3h-17.9zM1291.6 512.8h17.9v3.3h-17.9zM1361.9 512.8h17.9v3.3h-17.9zM1379.5 512.8h17.9v3.3h-17.9zM1397 512.8h17.9v3.3h-17.9zM1414.6 512.8h17.9v3.3h-17.9zM1432.2 512.8h17.9v3.3h-17.9zM1484.9 515.9h17.9v3.3h-17.9zM1520 515.9h17.9v3.3h-17.9zM1537.6 515.9h17.9v3.3h-17.9zM1607.9 515.9h17.9v3.3h-17.9zM1713.3 515.9h17.9v3.3h-17.9zM1730.9 515.9h17.9v3.3h-17.9zM1818.7 512.8h17.9v3.3h-17.9zM1853.8 512.8h17.9v3.3h-17.9zM1871.4 515.9h17.9v3.3h-17.9zM1889 515.9h17.9v3.3h-17.9zM1976.8 512.8h17.9v3.3h-17.9zM2029.5 512.8h17.9v3.3h-17.9zM2047.1 512.8h17.9v3.3h-17.9zM2064.7 515.9h17.9v3.3h-17.9zM2064.7 512.8h17.9v3.3h-17.9zM2099.8 515.9h17.9v3.3h-17.9z"/><path fill="#2ea07b" d="M1073 509.6h8.1v3.3h-8.1zM1080.8 509.6h17.9v3.3h-17.9zM1098.4 509.6h17.9v3.3h-17.9zM1115.9 509.6h17.9v3.3h-17.9zM1133.5 509.6h17.9v3.3h-17.9zM1151.1 509.6h17.9v3.3h-17.9zM1168.6 509.6h17.9v3.3h-17.9zM1203.8 509.6h17.9v3.3h-17.9zM1221.3 509.6h17.9v3.3h-17.9zM1238.9 509.6h17.9v3.3h-17.9zM1274 506.5h17.9v3.3h-17.9zM1291.6 509.6h17.9v3.3h-17.9zM1291.6 506.5h17.9v3.3h-17.9zM1309.2 509.6h17.9v3.3h-17.9zM1344.3 506.5h17.9v3.3h-17.9zM1361.9 509.6h17.9v3.3h-17.9zM1361.9 506.5h17.9v3.3h-17.9zM1379.5 509.6h17.9v3.3h-17.9zM1379.5 506.5h17.9v3.3h-17.9zM1397 509.6h17.9v3.3h-17.9zM1414.6 509.6h17.9v3.3h-17.9zM1432.2 509.6h17.9v3.3h-17.9zM1449.7 509.6h17.9v3.3h-17.9zM1467.3 509.6h17.9v3.3h-17.9zM1502.5 503.4h17.9v3.3h-17.9zM1520 509.6h17.9v3.3h-17.9zM1520 503.4h17.9v3.3h-17.9zM1520 497.1h17.9v3.3h-17.9zM1520 493.9h17.9v3.3h-17.9zM1537.6 503.4h17.9v3.3h-17.9zM1537.6 497.1h17.9v3.3h-17.9zM1537.6 493.9h17.9v3.3h-17.9zM1555.2 506.5h17.9v3.3h-17.9zM1555.2 500.2h17.9v3.3h-17.9zM1572.7 500.2h17.9v3.3h-17.9zM1590.3 500.2h17.9v3.3h-17.9zM1607.9 506.5h17.9v3.3h-17.9zM1607.9 497.1h17.9v3.3h-17.9zM1625.4 506.5h17.9v3.3h-17.9zM1625.4 500.2h17.9v3.3h-17.9zM1625.4 493.9h17.9v3.3h-17.9zM1643 506.5h17.9v3.3h-17.9zM1643 500.2h17.9v3.3h-17.9zM1643 493.9h17.9v3.3h-17.9zM1660.6 506.5h17.9v3.3h-17.9zM1660.6 503.4h17.9v3.3h-17.9zM1660.6 500.2h17.9v3.3h-17.9zM1660.6 493.9h17.9v3.3h-17.9zM1678.1 500.2h17.9v3.3h-17.9zM1678.1 493.9h17.9v3.3h-17.9zM1695.7 506.5h17.9v3.3h-17.9zM1695.7 500.2h17.9v3.3h-17.9zM1695.7 497.1h17.9v3.3h-17.9zM1695.7 493.9h17.9v3.3h-17.9zM1713.3 506.5h17.9v3.3h-17.9zM1713.3 497.1h17.9v3.3h-17.9zM1713.3 493.9h17.9v3.3h-17.9zM1730.9 509.6h17.9v3.3h-17.9zM1730.9 506.5h17.9v3.3h-17.9zM1730.9 493.9h17.9v3.3h-17.9zM1730.9 490.8h17.9v3.3h-17.9zM1748.4 509.6h17.9v3.3h-17.9zM1748.4 506.5h17.9v3.3h-17.9zM1748.4 503.4h17.9v3.3h-17.9zM1748.4 497.1h17.9v3.3h-17.9zM1766 509.6h17.9v3.3h-17.9zM1766 503.4h17.9v3.3h-17.9zM1766 500.2h17.9v3.3h-17.9zM1766 497.1h17.9v3.3h-17.9zM1783.6 509.6h17.9v3.3h-17.9zM1783.6 503.4h17.9v3.3h-17.9zM1783.6 500.2h17.9v3.3h-17.9zM1801.1 506.5h17.9v3.3h-17.9zM1801.1 503.4h17.9v3.3h-17.9zM1801.1 497.1h17.9v3.3h-17.9zM1818.7 506.5h17.9v3.3h-17.9zM1818.7 503.4h17.9v3.3h-17.9zM1818.7 497.1h17.9v3.3h-17.9zM1836.3 500.2h17.9v3.3h-17.9zM1836.3 497.1h17.9v3.3h-17.9zM1836.3 490.8h17.9v3.3h-17.9zM1853.8 506.5h17.9v3.3h-17.9zM1853.8 503.4h17.9v3.3h-17.9zM1853.8 497.1h17.9v3.3h-17.9zM1871.4 506.5h17.9v3.3h-17.9zM1871.4 503.4h17.9v3.3h-17.9zM1871.4 497.1h17.9v3.3h-17.9zM1889 503.4h17.9v3.3h-17.9zM1906.5 506.5h17.9v3.3h-17.9zM1906.5 503.4h17.9v3.3h-17.9zM1906.5 500.2h17.9v3.3h-17.9zM1924.1 500.2h17.9v3.3h-17.9zM1924.1 497.1h17.9v3.3h-17.9zM1941.7 506.5h17.9v3.3h-17.9zM1959.3 506.5h17.9v3.3h-17.9zM1959.3 503.4h17.9v3.3h-17.9zM1959.3 500.2h17.9v3.3h-17.9zM1976.8 506.5h17.9v3.3h-17.9zM1976.8 497.1h17.9v3.3h-17.9zM1994.4 497.1h17.9v3.3h-17.9zM1994.4 490.8h17.9v3.3h-17.9zM2012 509.6h17.9v3.3h-17.9zM2012 506.5h17.9v3.3h-17.9zM2012 503.4h17.9v3.3h-17.9zM2012 497.1h17.9v3.3h-17.9zM2029.5 503.4h17.9v3.3h-17.9zM2029.5 497.1h17.9v3.3h-17.9zM2047.1 500.2h17.9v3.3h-17.9zM2064.7 506.5h17.9v3.3h-17.9zM2082.2 506.5h17.9v3.3h-17.9zM2082.2 503.4h17.9v3.3h-17.9zM2082.2 497.1h17.9v3.3h-17.9zM2099.8 506.5h17.9v3.3h-17.9zM2099.8 497.1h17.9v3.3h-17.9zM2117.4 497.1h17.9v3.3h-17.9zM2135 497.1h17.9v3.3h-17.9zM2135 493.9h17.9v3.3h-17.9zM2152.5 497.1h17.9v3.3h-17.9zM2152.5 493.9h17.9v3.3h-17.9zM2170.1 506.5h17.9v3.3h-17.9zM2170.1 500.2h17.9v3.3h-17.9zM2187.7 506.5h17.9v3.3h-17.9zM2187.7 500.2h17.9v3.3h-17.9zM2187.7 497.1h17.9v3.3h-17.9zM2205.2 497.1h17.9v3.3h-17.9zM2222.8 503.4h17.9v3.3h-17.9zM2222.8 490.8h17.9v3.3h-17.9zM2240.4 509.6h17.9v3.3h-17.9zM2345.8 509.6h17.9v3.3h-17.9zM2363.4 509.6h17.9v3.3h-17.9z"/><path fill="#299882" d="M1073 506.5h8.1v3.3h-8.1zM1080.8 506.5h17.9v3.3h-17.9zM1098.4 506.5h17.9v3.3h-17.9zM1115.9 506.5h17.9v3.3h-17.9zM1151.1 506.5h17.9v3.3h-17.9zM1168.6 506.5h17.9v3.3h-17.9zM1186.2 509.6h17.9v3.3h-17.9zM1186.2 506.5h17.9v3.3h-17.9zM1203.8 506.5h17.9v3.3h-17.9zM1221.3 506.5h17.9v3.3h-17.9zM1238.9 506.5h17.9v3.3h-17.9zM1274 509.6h17.9v3.3h-17.9zM1309.2 506.5h17.9v3.3h-17.9zM1326.8 506.5h17.9v3.3h-17.9zM1397 506.5h17.9v3.3h-17.9zM1414.6 506.5h17.9v3.3h-17.9zM1432.2 506.5h17.9v3.3h-17.9zM1432.2 497.1h17.9v3.3h-17.9zM1449.7 506.5h17.9v3.3h-17.9zM1467.3 506.5h17.9v3.3h-17.9zM1484.9 506.5h17.9v3.3h-17.9zM1484.9 503.4h17.9v3.3h-17.9zM1484.9 497.1h17.9v3.3h-17.9zM1484.9 493.9h17.9v3.3h-17.9zM1502.5 506.5h17.9v3.3h-17.9zM1502.5 497.1h17.9v3.3h-17.9zM1502.5 493.9h17.9v3.3h-17.9zM1520 506.5h17.9v3.3h-17.9zM1520 487.7h17.9v3.3h-17.9zM1537.6 506.5h17.9v3.3h-17.9zM1555.2 493.9h17.9v3.3h-17.9zM1555.2 487.7h17.9v3.3h-17.9zM1572.7 497.1h17.9v3.3h-17.9zM1572.7 490.8h17.9v3.3h-17.9zM1572.7 487.7h17.9v3.3h-17.9zM1590.3 497.1h17.9v3.3h-17.9zM1590.3 493.9h17.9v3.3h-17.9zM1590.3 490.8h17.9v3.3h-17.9zM1607.9 500.2h17.9v3.3h-17.9zM1607.9 493.9h17.9v3.3h-17.9zM1625.4 490.8h17.9v3.3h-17.9zM1643 487.7h17.9v3.3h-17.9zM1660.6 490.8h17.9v3.3h-17.9zM1660.6 487.7h17.9v3.3h-17.9zM1713.3 503.4h17.9v3.3h-17.9zM1713.3 490.8h17.9v3.3h-17.9zM1730.9 503.4h17.9v3.3h-17.9zM1748.4 493.9h17.9v3.3h-17.9zM1748.4 490.8h17.9v3.3h-17.9zM1766 493.9h17.9v3.3h-17.9zM1766 490.8h17.9v3.3h-17.9zM1783.6 493.9h17.9v3.3h-17.9zM1801.1 493.9h17.9v3.3h-17.9zM1801.1 490.8h17.9v3.3h-17.9zM1818.7 493.9h17.9v3.3h-17.9zM1818.7 490.8h17.9v3.3h-17.9zM1836.3 506.5h17.9v3.3h-17.9zM1836.3 493.9h17.9v3.3h-17.9zM1853.8 493.9h17.9v3.3h-17.9zM1853.8 490.8h17.9v3.3h-17.9zM1889 493.9h17.9v3.3h-17.9zM1906.5 493.9h17.9v3.3h-17.9zM1924.1 506.5h17.9v3.3h-17.9zM1924.1 493.9h17.9v3.3h-17.9zM1959.3 493.9h17.9v3.3h-17.9zM1959.3 490.8h17.9v3.3h-17.9zM1976.8 493.9h17.9v3.3h-17.9zM1976.8 490.8h17.9v3.3h-17.9zM1994.4 506.5h17.9v3.3h-17.9zM1994.4 493.9h17.9v3.3h-17.9zM2012 493.9h17.9v3.3h-17.9zM2012 490.8h17.9v3.3h-17.9zM2029.5 506.5h17.9v3.3h-17.9zM2029.5 493.9h17.9v3.3h-17.9zM2047.1 506.5h17.9v3.3h-17.9zM2047.1 493.9h17.9v3.3h-17.9zM2064.7 493.9h17.9v3.3h-17.9zM2082.2 493.9h17.9v3.3h-17.9zM2099.8 503.4h17.9v3.3h-17.9zM2099.8 493.9h17.9v3.3h-17.9zM2099.8 490.8h17.9v3.3h-17.9zM2117.4 506.5h17.9v3.3h-17.9zM2117.4 503.4h17.9v3.3h-17.9zM2117.4 490.8h17.9v3.3h-17.9zM2135 503.4h17.9v3.3h-17.9zM2135 490.8h17.9v3.3h-17.9zM2152.5 506.5h17.9v3.3h-17.9zM2152.5 503.4h17.9v3.3h-17.9zM2170.1 493.9h17.9v3.3h-17.9zM2187.7 493.9h17.9v3.3h-17.9zM2187.7 490.8h17.9v3.3h-17.9zM2205.2 506.5h17.9v3.3h-17.9zM2205.2 493.9h17.9v3.3h-17.9zM2205.2 490.8h17.9v3.3h-17.9zM2222.8 506.5h17.9v3.3h-17.9zM2222.8 493.9h17.9v3.3h-17.9zM2222.8 484.5h17.9v3.3h-17.9zM2257.9 509.6h17.9v3.3h-17.9zM2257.9 506.5h17.9v3.3h-17.9zM2275.5 509.6h17.9v3.3h-17.9zM2275.5 506.5h17.9v3.3h-17.9zM2293.1 509.6h17.9v3.3h-17.9zM2293.1 506.5h17.9v3.3h-17.9zM2293.1 503.4h17.9v3.3h-17.9zM2310.6 509.6h17.9v3.3h-17.9zM2310.6 506.5h17.9v3.3h-17.9zM2310.6 503.4h17.9v3.3h-17.9zM2328.2 509.6h17.9v3.3h-17.9zM2345.8 503.4h17.9v3.3h-17.9zM2380.9 509.6h17.9v3.3h-17.9zM2398.5 509.6h17.9v3.3h-17.9zM2398.5 500.2h17.9v3.3h-17.9zM2416.1 509.6h17.9v3.3h-17.9zM2416.1 500.2h17.9v3.3h-17.9zM2433.6 509.6h17.9v3.3h-17.9zM2433.6 500.2h17.9v3.3h-17.9zM2451.2 509.6h17.9v3.3h-17.9zM2451.2 506.5h17.9v3.3h-17.9zM2451.2 500.2h17.9v3.3h-17.9zM2468.8 506.5h17.9v3.3h-17.9zM2486.3 509.6h17.9v3.3h-17.9zM2486.3 506.5h17.9v3.3h-17.9z"/><path fill="#278e88" d="M1073 503.4h8.1v3.3h-8.1zM1073 497.1h8.1v3.3h-8.1zM1080.8 500.2h17.9v3.3h-17.9zM1098.4 503.4h17.9v3.3h-17.9zM1098.4 500.2h17.9v3.3h-17.9zM1115.9 503.4h17.9v3.3h-17.9zM1115.9 500.2h17.9v3.3h-17.9zM1133.5 506.5h17.9v3.3h-17.9zM1133.5 500.2h17.9v3.3h-17.9zM1151.1 503.4h17.9v3.3h-17.9zM1168.6 503.4h17.9v3.3h-17.9zM1168.6 500.2h17.9v3.3h-17.9zM1186.2 503.4h17.9v3.3h-17.9zM1186.2 500.2h17.9v3.3h-17.9zM1221.3 503.4h17.9v3.3h-17.9zM1221.3 497.1h17.9v3.3h-17.9zM1238.9 497.1h17.9v3.3h-17.9zM1256.5 506.5h17.9v3.3h-17.9zM1256.5 503.4h17.9v3.3h-17.9zM1291.6 503.4h17.9v3.3h-17.9zM1291.6 500.2h17.9v3.3h-17.9zM1291.6 497.1h17.9v3.3h-17.9zM1309.2 503.4h17.9v3.3h-17.9zM1309.2 497.1h17.9v3.3h-17.9zM1326.8 497.1h17.9v3.3h-17.9zM1361.9 503.4h17.9v3.3h-17.9zM1361.9 500.2h17.9v3.3h-17.9zM1379.5 500.2h17.9v3.3h-17.9zM1379.5 497.1h17.9v3.3h-17.9zM1379.5 493.9h17.9v3.3h-17.9zM1397 497.1h17.9v3.3h-17.9zM1397 493.9h17.9v3.3h-17.9zM1414.6 503.4h17.9v3.3h-17.9zM1414.6 500.2h17.9v3.3h-17.9zM1414.6 497.1h17.9v3.3h-17.9zM1432.2 503.4h17.9v3.3h-17.9zM1432.2 500.2h17.9v3.3h-17.9zM1449.7 500.2h17.9v3.3h-17.9zM1449.7 497.1h17.9v3.3h-17.9zM1467.3 500.2h17.9v3.3h-17.9zM1520 484.5h17.9v3.3h-17.9zM1537.6 484.5h17.9v3.3h-17.9zM1555.2 490.8h17.9v3.3h-17.9zM1572.7 493.9h17.9v3.3h-17.9zM1590.3 487.7h17.9v3.3h-17.9zM1607.9 490.8h17.9v3.3h-17.9zM1607.9 487.7h17.9v3.3h-17.9zM1625.4 487.7h17.9v3.3h-17.9zM1643 490.8h17.9v3.3h-17.9zM1678.1 490.8h17.9v3.3h-17.9zM1678.1 487.7h17.9v3.3h-17.9zM1695.7 490.8h17.9v3.3h-17.9zM1695.7 487.7h17.9v3.3h-17.9zM1713.3 487.7h17.9v3.3h-17.9zM1766 484.5h17.9v3.3h-17.9zM1783.6 490.8h17.9v3.3h-17.9zM1801.1 487.7h17.9v3.3h-17.9zM1853.8 487.7h17.9v3.3h-17.9zM1871.4 493.9h17.9v3.3h-17.9zM1889 490.8h17.9v3.3h-17.9zM1906.5 490.8h17.9v3.3h-17.9zM1941.7 493.9h17.9v3.3h-17.9zM1941.7 490.8h17.9v3.3h-17.9zM2029.5 490.8h17.9v3.3h-17.9zM2029.5 487.7h17.9v3.3h-17.9zM2047.1 487.7h17.9v3.3h-17.9zM2064.7 487.7h17.9v3.3h-17.9zM2082.2 490.8h17.9v3.3h-17.9zM2135 506.5h17.9v3.3h-17.9zM2135 487.7h17.9v3.3h-17.9zM2152.5 490.8h17.9v3.3h-17.9zM2170.1 490.8h17.9v3.3h-17.9zM2205.2 484.5h17.9v3.3h-17.9zM2240.4 506.5h17.9v3.3h-17.9zM2240.4 500.2h17.9v3.3h-17.9zM2240.4 497.1h17.9v3.3h-17.9zM2257.9 503.4h17.9v3.3h-17.9zM2257.9 500.2h17.9v3.3h-17.9zM2257.9 497.1h17.9v3.3h-17.9zM2275.5 500.2h17.9v3.3h-17.9zM2275.5 497.1h17.9v3.3h-17.9zM2293.1 497.1h17.9v3.3h-17.9zM2328.2 506.5h17.9v3.3h-17.9zM2328.2 503.4h17.9v3.3h-17.9zM2345.8 506.5h17.9v3.3h-17.9zM2345.8 500.2h17.9v3.3h-17.9zM2345.8 497.1h17.9v3.3h-17.9zM2363.4 506.5h17.9v3.3h-17.9zM2363.4 503.4h17.9v3.3h-17.9zM2380.9 506.5h17.9v3.3h-17.9zM2380.9 503.4h17.9v3.3h-17.9zM2380.9 500.2h17.9v3.3h-17.9zM2398.5 506.5h17.9v3.3h-17.9zM2398.5 503.4h17.9v3.3h-17.9zM2416.1 506.5h17.9v3.3h-17.9zM2416.1 503.4h17.9v3.3h-17.9zM2433.6 506.5h17.9v3.3h-17.9zM2451.2 503.4h17.9v3.3h-17.9zM2468.8 509.6h17.9v3.3h-17.9zM2468.8 503.4h17.9v3.3h-17.9zM2468.8 500.2h17.9v3.3h-17.9zM2486.3 503.4h17.9v3.3h-17.9zM2486.3 500.2h17.9v3.3h-17.9z"/><path fill="#288287" d="M1073 500.2h8.1v3.3h-8.1zM1073 493.9h8.1v3.3h-8.1zM1080.8 503.4h17.9v3.3h-17.9zM1080.8 497.1h17.9v3.3h-17.9zM1080.8 493.9h17.9v3.3h-17.9zM1098.4 493.9h17.9v3.3h-17.9zM1098.4 490.8h17.9v3.3h-17.9zM1115.9 497.1h17.9v3.3h-17.9zM1115.9 493.9h17.9v3.3h-17.9zM1133.5 503.4h17.9v3.3h-17.9zM1133.5 493.9h17.9v3.3h-17.9zM1151.1 500.2h17.9v3.3h-17.9zM1151.1 497.1h17.9v3.3h-17.9zM1151.1 493.9h17.9v3.3h-17.9zM1168.6 497.1h17.9v3.3h-17.9zM1186.2 497.1h17.9v3.3h-17.9zM1203.8 503.4h17.9v3.3h-17.9zM1203.8 500.2h17.9v3.3h-17.9zM1203.8 497.1h17.9v3.3h-17.9zM1221.3 500.2h17.9v3.3h-17.9zM1238.9 503.4h17.9v3.3h-17.9zM1238.9 500.2h17.9v3.3h-17.9zM1256.5 500.2h17.9v3.3h-17.9zM1256.5 497.1h17.9v3.3h-17.9zM1256.5 490.8h17.9v3.3h-17.9zM1274 503.4h17.9v3.3h-17.9zM1274 500.2h17.9v3.3h-17.9zM1274 497.1h17.9v3.3h-17.9zM1274 493.9h17.9v3.3h-17.9zM1274 490.8h17.9v3.3h-17.9zM1291.6 493.9h17.9v3.3h-17.9zM1309.2 500.2h17.9v3.3h-17.9zM1309.2 484.5h17.9v3.3h-17.9zM1326.8 503.4h17.9v3.3h-17.9zM1326.8 500.2h17.9v3.3h-17.9zM1326.8 493.9h17.9v3.3h-17.9zM1344.3 503.4h17.9v3.3h-17.9zM1344.3 500.2h17.9v3.3h-17.9zM1344.3 497.1h17.9v3.3h-17.9zM1361.9 497.1h17.9v3.3h-17.9zM1361.9 493.9h17.9v3.3h-17.9zM1379.5 503.4h17.9v3.3h-17.9zM1397 503.4h17.9v3.3h-17.9zM1397 500.2h17.9v3.3h-17.9zM1414.6 493.9h17.9v3.3h-17.9zM1449.7 493.9h17.9v3.3h-17.9zM1467.3 503.4h17.9v3.3h-17.9zM1467.3 497.1h17.9v3.3h-17.9zM1484.9 490.8h17.9v3.3h-17.9zM1484.9 484.5h17.9v3.3h-17.9zM1502.5 490.8h17.9v3.3h-17.9zM1502.5 484.5h17.9v3.3h-17.9zM1520 490.8h17.9v3.3h-17.9zM1537.6 490.8h17.9v3.3h-17.9zM1537.6 487.7h17.9v3.3h-17.9zM1555.2 484.5h17.9v3.3h-17.9zM1730.9 487.7h17.9v3.3h-17.9zM1748.4 487.7h17.9v3.3h-17.9zM1748.4 484.5h17.9v3.3h-17.9zM1766 487.7h17.9v3.3h-17.9zM1783.6 487.7h17.9v3.3h-17.9zM1783.6 484.5h17.9v3.3h-17.9zM1801.1 481.4h17.9v3.3h-17.9zM1836.3 487.7h17.9v3.3h-17.9zM1871.4 490.8h17.9v3.3h-17.9zM1871.4 487.7h17.9v3.3h-17.9zM1906.5 487.7h17.9v3.3h-17.9zM1924.1 490.8h17.9v3.3h-17.9zM1924.1 487.7h17.9v3.3h-17.9zM1976.8 487.7h17.9v3.3h-17.9zM1994.4 487.7h17.9v3.3h-17.9zM2012 487.7h17.9v3.3h-17.9zM2047.1 490.8h17.9v3.3h-17.9zM2064.7 490.8h17.9v3.3h-17.9zM2082.2 487.7h17.9v3.3h-17.9zM2082.2 478.2h17.9v3.3h-17.9zM2099.8 487.7h17.9v3.3h-17.9zM2117.4 487.7h17.9v3.3h-17.9zM2152.5 487.7h17.9v3.3h-17.9zM2170.1 487.7h17.9v3.3h-17.9zM2187.7 487.7h17.9v3.3h-17.9zM2205.2 487.7h17.9v3.3h-17.9zM2222.8 487.7h17.9v3.3h-17.9zM2240.4 503.4h17.9v3.3h-17.9zM2275.5 503.4h17.9v3.3h-17.9zM2293.1 500.2h17.9v3.3h-17.9zM2310.6 500.2h17.9v3.3h-17.9zM2310.6 497.1h17.9v3.3h-17.9zM2310.6 490.8h17.9v3.3h-17.9zM2328.2 500.2h17.9v3.3h-17.9zM2328.2 497.1h17.9v3.3h-17.9zM2328.2 493.9h17.9v3.3h-17.9zM2363.4 500.2h17.9v3.3h-17.9zM2363.4 497.1h17.9v3.3h-17.9zM2363.4 493.9h17.9v3.3h-17.9zM2380.9 497.1h17.9v3.3h-17.9zM2380.9 493.9h17.9v3.3h-17.9zM2398.5 497.1h17.9v3.3h-17.9zM2433.6 503.4h17.9v3.3h-17.9zM2433.6 490.8h17.9v3.3h-17.9zM2451.2 490.8h17.9v3.3h-17.9zM2468.8 493.9h17.9v3.3h-17.9zM2486.3 497.1h17.9v3.3h-17.9zM2503.9 515.9h17.9v3.1h-17.9z"/><path fill="#2b7581" d="M1073 490.8h8.1v3.3h-8.1zM1080.8 490.8h17.9v3.3h-17.9zM1098.4 497.1h17.9v3.3h-17.9zM1115.9 490.8h17.9v3.3h-17.9zM1133.5 497.1h17.9v3.3h-17.9zM1133.5 490.8h17.9v3.3h-17.9zM1151.1 490.8h17.9v3.3h-17.9zM1168.6 493.9h17.9v3.3h-17.9zM1186.2 493.9h17.9v3.3h-17.9zM1203.8 490.8h17.9v3.3h-17.9zM1221.3 490.8h17.9v3.3h-17.9zM1238.9 493.9h17.9v3.3h-17.9zM1238.9 490.8h17.9v3.3h-17.9zM1256.5 493.9h17.9v3.3h-17.9zM1309.2 493.9h17.9v3.3h-17.9zM1326.8 490.8h17.9v3.3h-17.9zM1344.3 493.9h17.9v3.3h-17.9zM1414.6 490.8h17.9v3.3h-17.9zM1432.2 493.9h17.9v3.3h-17.9zM1449.7 503.4h17.9v3.3h-17.9zM1467.3 493.9h17.9v3.3h-17.9zM1484.9 487.7h17.9v3.3h-17.9zM1502.5 487.7h17.9v3.3h-17.9zM1537.6 481.4h17.9v3.3h-17.9zM1572.7 484.5h17.9v3.3h-17.9zM1590.3 484.5h17.9v3.3h-17.9zM1607.9 484.5h17.9v3.3h-17.9zM1625.4 484.5h17.9v3.3h-17.9zM1678.1 484.5h17.9v3.3h-17.9zM1695.7 481.4h17.9v3.3h-17.9zM1766 481.4h17.9v3.3h-17.9zM1783.6 481.4h17.9v3.3h-17.9zM1801.1 484.5h17.9v3.3h-17.9zM1818.7 487.7h17.9v3.3h-17.9zM1818.7 484.5h17.9v3.3h-17.9zM1818.7 481.4h17.9v3.3h-17.9zM1853.8 481.4h17.9v3.3h-17.9zM1871.4 484.5h17.9v3.3h-17.9zM1889 487.7h17.9v3.3h-17.9zM1906.5 481.4h17.9v3.3h-17.9zM1941.7 484.5h17.9v3.3h-17.9zM1941.7 481.4h17.9v3.3h-17.9zM1959.3 487.7h17.9v3.3h-17.9zM1959.3 481.4h17.9v3.3h-17.9zM2029.5 484.5h17.9v3.3h-17.9zM2047.1 484.5h17.9v3.3h-17.9zM2064.7 478.2h17.9v3.3h-17.9zM2082.2 481.4h17.9v3.3h-17.9zM2099.8 484.5h17.9v3.3h-17.9zM2099.8 478.2h17.9v3.3h-17.9zM2117.4 481.4h17.9v3.3h-17.9zM2135 484.5h17.9v3.3h-17.9zM2135 481.4h17.9v3.3h-17.9zM2152.5 481.4h17.9v3.3h-17.9zM2240.4 493.9h17.9v3.3h-17.9zM2275.5 493.9h17.9v3.3h-17.9zM2310.6 493.9h17.9v3.3h-17.9zM2310.6 481.4h17.9v3.3h-17.9zM2328.2 490.8h17.9v3.3h-17.9zM2345.8 493.9h17.9v3.3h-17.9zM2398.5 493.9h17.9v3.3h-17.9zM2416.1 497.1h17.9v3.3h-17.9zM2416.1 493.9h17.9v3.3h-17.9zM2433.6 497.1h17.9v3.3h-17.9zM2433.6 493.9h17.9v3.3h-17.9zM2451.2 497.1h17.9v3.3h-17.9zM2451.2 493.9h17.9v3.3h-17.9zM2451.2 487.7h17.9v3.3h-17.9zM2468.8 497.1h17.9v3.3h-17.9zM2468.8 490.8h17.9v3.3h-17.9zM2486.3 493.9h17.9v3.3h-17.9zM2486.3 490.8h17.9v3.3h-17.9zM2503.9 512.8h17.9v3.1h-17.9z"/><path fill="#2e617a" d="M1073 487.7h8.1v3.3h-8.1zM1073 484.5h8.1v3.3h-8.1zM1098.4 484.5h17.9v3.3h-17.9zM1133.5 484.5h17.9v3.3h-17.9zM1221.3 481.4h17.9v3.3h-17.9zM1238.9 487.7h17.9v3.3h-17.9zM1274 487.7h17.9v3.3h-17.9zM1291.6 487.7h17.9v3.3h-17.9zM1309.2 490.8h17.9v3.3h-17.9zM1309.2 487.7h17.9v3.3h-17.9zM1344.3 487.7h17.9v3.3h-17.9zM1344.3 484.5h17.9v3.3h-17.9zM1361.9 490.8h17.9v3.3h-17.9zM1361.9 487.7h17.9v3.3h-17.9zM1361.9 484.5h17.9v3.3h-17.9zM1397 490.8h17.9v3.3h-17.9zM1397 484.5h17.9v3.3h-17.9zM1397 478.2h17.9v3.3h-17.9zM1449.7 484.5h17.9v3.3h-17.9zM1484.9 478.2h17.9v3.3h-17.9zM1502.5 481.4h17.9v3.3h-17.9zM1520 481.4h17.9v3.3h-17.9zM1520 478.2h17.9v3.3h-17.9zM1590.3 481.4h17.9v3.3h-17.9zM1607.9 478.2h17.9v3.3h-17.9zM1625.4 478.2h17.9v3.3h-17.9zM1643 478.2h17.9v3.3h-17.9zM1660.6 484.5h17.9v3.3h-17.9zM1660.6 481.4h17.9v3.3h-17.9zM1660.6 478.2h17.9v3.3h-17.9zM1713.3 484.5h17.9v3.3h-17.9zM1713.3 481.4h17.9v3.3h-17.9zM1766 478.2h17.9v3.3h-17.9zM1836.3 478.2h17.9v3.3h-17.9zM1889 481.4h17.9v3.3h-17.9zM1906.5 478.2h17.9v3.3h-17.9zM1941.7 478.2h17.9v3.3h-17.9zM1959.3 478.2h17.9v3.3h-17.9zM1994.4 478.2h17.9v3.3h-17.9zM2012 481.4h17.9v3.3h-17.9zM2047.1 481.4h17.9v3.3h-17.9zM2047.1 478.2h17.9v3.3h-17.9zM2117.4 478.2h17.9v3.3h-17.9zM2170.1 481.4h17.9v3.3h-17.9zM2187.7 481.4h17.9v3.3h-17.9zM2222.8 481.4h17.9v3.3h-17.9zM2240.4 484.5h17.9v3.3h-17.9zM2240.4 478.2h17.9v3.3h-17.9zM2257.9 490.8h17.9v3.3h-17.9zM2257.9 487.7h17.9v3.3h-17.9zM2257.9 484.5h17.9v3.3h-17.9zM2257.9 478.2h17.9v3.3h-17.9zM2275.5 490.8h17.9v3.3h-17.9zM2293.1 481.4h17.9v3.3h-17.9zM2328.2 484.5h17.9v3.3h-17.9zM2345.8 484.5h17.9v3.3h-17.9zM2363.4 490.8h17.9v3.3h-17.9zM2380.9 490.8h17.9v3.3h-17.9zM2398.5 481.4h17.9v3.3h-17.9zM2416.1 484.5h17.9v3.3h-17.9zM2433.6 487.7h17.9v3.3h-17.9zM2433.6 481.4h17.9v3.3h-17.9zM2486.3 475.1h17.9v3.3h-17.9zM2503.9 503.4h17.9v3.1h-17.9z"/><path fill="#354379" d="M1073 481.4h8.1v3.3h-8.1zM1080.8 478.2h17.9v3.3h-17.9zM1080.8 475.1h17.9v3.3h-17.9zM1151.1 481.4h17.9v3.3h-17.9zM1186.2 484.5h17.9v3.3h-17.9zM1203.8 478.2h17.9v3.3h-17.9zM1221.3 478.2h17.9v3.3h-17.9zM1238.9 478.2h17.9v3.3h-17.9zM1256.5 478.2h17.9v3.3h-17.9zM1291.6 478.2h17.9v3.3h-17.9zM1309.2 478.2h17.9v3.3h-17.9zM1326.8 478.2h17.9v3.3h-17.9zM1344.3 478.2h17.9v3.3h-17.9zM1397 481.4h17.9v3.3h-17.9zM1397 475.1h17.9v3.3h-17.9zM1449.7 475.1h17.9v3.3h-17.9zM1502.5 475.1h17.9v3.3h-17.9zM1607.9 475.1h17.9v3.3h-17.9zM1625.4 472h17.9v3.3h-17.9zM1660.6 475.1h17.9v3.3h-17.9zM1695.7 478.2h17.9v3.3h-17.9zM1713.3 478.2h17.9v3.3h-17.9zM1730.9 475.1h17.9v3.3h-17.9zM1836.3 475.1h17.9v3.3h-17.9zM1853.8 475.1h17.9v3.3h-17.9zM1871.4 475.1h17.9v3.3h-17.9zM1924.1 472h17.9v3.3h-17.9zM2064.7 475.1h17.9v3.3h-17.9zM2082.2 475.1h17.9v3.3h-17.9zM2117.4 475.1h17.9v3.3h-17.9zM2205.2 481.4h17.9v3.3h-17.9zM2275.5 478.2h17.9v3.3h-17.9zM2293.1 478.2h17.9v3.3h-17.9zM2293.1 475.1h17.9v3.3h-17.9zM2310.6 478.2h17.9v3.3h-17.9zM2310.6 472h17.9v3.3h-17.9zM2328.2 478.2h17.9v3.3h-17.9zM2345.8 475.1h17.9v3.3h-17.9zM2380.9 475.1h17.9v3.3h-17.9zM2433.6 478.2h17.9v3.3h-17.9zM2503.9 493.9h17.9v3.1h-17.9zM2503.9 490.8h17.9v3.1h-17.9z"/><path fill="#305778" d="M1073 478.2h8.1v3.3h-8.1zM1080.8 487.7h17.9v3.3h-17.9zM1080.8 484.5h17.9v3.3h-17.9zM1151.1 487.7h17.9v3.3h-17.9zM1151.1 484.5h17.9v3.3h-17.9zM1168.6 487.7h17.9v3.3h-17.9zM1186.2 487.7h17.9v3.3h-17.9zM1186.2 481.4h17.9v3.3h-17.9zM1203.8 481.4h17.9v3.3h-17.9zM1221.3 484.5h17.9v3.3h-17.9zM1238.9 481.4h17.9v3.3h-17.9zM1274 481.4h17.9v3.3h-17.9zM1309.2 481.4h17.9v3.3h-17.9zM1326.8 487.7h17.9v3.3h-17.9zM1326.8 484.5h17.9v3.3h-17.9zM1344.3 481.4h17.9v3.3h-17.9zM1379.5 490.8h17.9v3.3h-17.9zM1414.6 487.7h17.9v3.3h-17.9zM1414.6 484.5h17.9v3.3h-17.9zM1414.6 478.2h17.9v3.3h-17.9zM1432.2 487.7h17.9v3.3h-17.9zM1432.2 484.5h17.9v3.3h-17.9zM1449.7 490.8h17.9v3.3h-17.9zM1449.7 487.7h17.9v3.3h-17.9zM1467.3 487.7h17.9v3.3h-17.9zM1484.9 481.4h17.9v3.3h-17.9zM1502.5 478.2h17.9v3.3h-17.9zM1537.6 478.2h17.9v3.3h-17.9zM1537.6 475.1h17.9v3.3h-17.9zM1555.2 478.2h17.9v3.3h-17.9zM1572.7 478.2h17.9v3.3h-17.9zM1730.9 481.4h17.9v3.3h-17.9zM1730.9 478.2h17.9v3.3h-17.9zM1748.4 481.4h17.9v3.3h-17.9zM1748.4 478.2h17.9v3.3h-17.9zM1748.4 475.1h17.9v3.3h-17.9zM1766 475.1h17.9v3.3h-17.9zM1783.6 478.2h17.9v3.3h-17.9zM1871.4 478.2h17.9v3.3h-17.9zM1889 478.2h17.9v3.3h-17.9zM1906.5 475.1h17.9v3.3h-17.9zM1924.1 478.2h17.9v3.3h-17.9zM1924.1 475.1h17.9v3.3h-17.9zM1959.3 475.1h17.9v3.3h-17.9zM1976.8 478.2h17.9v3.3h-17.9zM1994.4 475.1h17.9v3.3h-17.9zM2012 478.2h17.9v3.3h-17.9zM2012 475.1h17.9v3.3h-17.9zM2029.5 478.2h17.9v3.3h-17.9zM2047.1 475.1h17.9v3.3h-17.9zM2064.7 484.5h17.9v3.3h-17.9zM2064.7 481.4h17.9v3.3h-17.9zM2135 478.2h17.9v3.3h-17.9zM2152.5 484.5h17.9v3.3h-17.9zM2170.1 484.5h17.9v3.3h-17.9zM2187.7 478.2h17.9v3.3h-17.9zM2222.8 475.1h17.9v3.3h-17.9zM2240.4 481.4h17.9v3.3h-17.9zM2275.5 481.4h17.9v3.3h-17.9zM2293.1 484.5h17.9v3.3h-17.9zM2345.8 478.2h17.9v3.3h-17.9zM2363.4 484.5h17.9v3.3h-17.9zM2380.9 484.5h17.9v3.3h-17.9zM2398.5 484.5h17.9v3.3h-17.9zM2416.1 487.7h17.9v3.3h-17.9zM2416.1 481.4h17.9v3.3h-17.9zM2433.6 484.5h17.9v3.3h-17.9zM2451.2 484.5h17.9v3.3h-17.9zM2451.2 475.1h17.9v3.3h-17.9zM2468.8 481.4h17.9v3.3h-17.9zM2468.8 475.1h17.9v3.3h-17.9zM2486.3 484.5h17.9v3.3h-17.9zM2503.9 500.2h17.9v3.1h-17.9z"/><path fill="#343166" d="M1073 475.1h8.1v3.3h-8.1zM1274 472h17.9v3.3h-17.9zM1291.6 472h17.9v3.3h-17.9zM1449.7 472h17.9v3.3h-17.9zM1467.3 472h17.9v3.3h-17.9zM1520 472h17.9v3.3h-17.9zM1537.6 472h17.9v3.3h-17.9zM1572.7 472h17.9v3.3h-17.9zM1678.1 472h17.9v3.3h-17.9zM1713.3 472h17.9v3.3h-17.9zM1783.6 472h17.9v3.3h-17.9zM1818.7 472h17.9v3.3h-17.9zM1871.4 472h17.9v3.3h-17.9zM1976.8 472h17.9v3.3h-17.9zM1994.4 472h17.9v3.3h-17.9zM2047.1 472h17.9v3.3h-17.9zM2082.2 472h17.9v3.3h-17.9zM2170.1 475.1h17.9v3.3h-17.9zM2170.1 472h17.9v3.3h-17.9zM2187.7 472h17.9v3.3h-17.9zM2205.2 472h17.9v3.3h-17.9zM2222.8 472h17.9v3.3h-17.9zM2240.4 472h17.9v3.3h-17.9zM2275.5 472h17.9v3.3h-17.9zM2433.6 472h17.9v3.3h-17.9zM2451.2 472h17.9v3.3h-17.9zM2468.8 478.2h17.9v3.3h-17.9zM2503.9 484.5h17.9v3.1h-17.9zM2503.9 481.4h17.9v3.1h-17.9z"/><path fill="#312952" d="M1073 472h8.1v3.3h-8.1zM1080.8 472h17.9v3.3h-17.9zM1151.1 475.1h17.9v3.3h-17.9zM1151.1 472h17.9v3.3h-17.9zM1238.9 472h17.9v3.3h-17.9zM1361.9 472h17.9v3.3h-17.9zM1730.9 472h17.9v3.3h-17.9zM1889 472h17.9v3.3h-17.9zM2099.8 472h17.9v3.3h-17.9zM2257.9 472h17.9v3.3h-17.9zM2345.8 472h17.9v3.3h-17.9zM2503.9 478.2h17.9v3.1h-17.9z"/><path fill="#2c2844" d="M1073 453.1h8.1v3.1h-8.1zM1080.8 424.9h17.9v3.1h-17.9zM1115.9 418.6h17.9v3.1h-17.9zM1115.9 377.8h17.9v6.3h-17.9zM1115.9 377.8h17.9v3.1h-17.9zM1151.1 428h17.9v3.1h-17.9zM1168.6 446.8h17.9v3.1h-17.9zM1186.2 456.3h17.9v3.1h-17.9zM1221.3 459.4h17.9v3.1h-17.9zM1221.3 415.4h17.9v3.1h-17.9zM1238.9 462.5h17.9v3.1h-17.9zM1238.9 424.9h17.9v3.1h-17.9zM1256.5 384h17.9v3.1h-17.9zM1309.2 465.7h17.9v3.1h-17.9zM1309.2 384h17.9v3.1h-17.9zM1344.3 396.6h17.9v3.1h-17.9zM1379.5 468.8h17.9v3.1h-17.9zM1397 459.4h17.9v3.1h-17.9zM1414.6 418.6h17.9v3.1h-17.9zM1467.3 456.3h17.9v3.1h-17.9zM1467.3 431.1h17.9v3.1h-17.9zM1484.9 468.8h17.9v3.1h-17.9zM1520 462.5h17.9v6.3h-17.9zM1520 462.5h17.9v3.1h-17.9zM1537.6 440.6h17.9v3.1h-17.9zM1607.9 437.4h17.9v3.1h-17.9zM1607.9 418.6h17.9v3.1h-17.9zM1625.4 446.8h17.9v3.1h-17.9zM1643 415.4h17.9v3.1h-17.9zM1643 384h17.9v3.1h-17.9zM1695.7 399.7h17.9v3.1h-17.9zM1713.3 446.8h17.9v3.1h-17.9zM1730.9 443.7h17.9v3.1h-17.9zM1748.4 453.1h17.9v3.1h-17.9zM1748.4 437.4h17.9v9.4h-17.9zM1766 459.4h17.9v3.1h-17.9zM1818.7 355.8h17.9v3.1h-17.9zM1836.3 412.3h17.9v3.1h-17.9zM1853.8 424.9h17.9v3.1h-17.9zM1871.4 437.4h17.9v3.1h-17.9zM1889 456.3h17.9v3.1h-17.9zM1889 396.6h17.9v3.1h-17.9zM1906.5 428h17.9v3.1h-17.9zM1941.7 453.1h17.9v3.1h-17.9zM1941.7 415.4h17.9v3.1h-17.9zM1959.3 468.8h17.9v3.1h-17.9zM1959.3 450h17.9v3.1h-17.9zM1976.8 450h17.9v3.1h-17.9zM1976.8 415.4h17.9v3.1h-17.9zM1976.8 362.1h17.9v9.4h-17.9zM2012 465.7h17.9v3.1h-17.9zM2012 393.5h17.9v3.1h-17.9zM2012 358.9h17.9v3.1h-17.9zM2029.5 450h17.9v9.4h-17.9zM2064.7 450h17.9v3.1h-17.9zM2064.7 402.9h17.9v3.1h-17.9zM2099.8 380.9h17.9v9.4h-17.9zM2135 437.4h17.9v6.3h-17.9zM2152.5 402.9h17.9v3.1h-17.9zM2152.5 396.6h17.9v3.1h-17.9zM2187.7 421.7h17.9v3.1h-17.9zM2222.8 450h17.9v9.4h-17.9zM2222.8 424.9h17.9v3.1h-17.9zM2240.4 446.8h17.9v3.1h-17.9zM2257.9 406h17.9v3.1h-17.9z"/><path fill="#364e78" d="M1073 421.7h8.1v3.1h-8.1zM1186.2 421.7h17.9v3.1h-17.9zM1203.8 424.9h17.9v3.1h-17.9zM1221.3 421.7h17.9v6.3h-17.9zM1238.9 431.1h17.9v3.1h-17.9zM1238.9 421.7h17.9v3.1h-17.9zM1379.5 424.9h17.9v3.1h-17.9zM1484.9 424.9h17.9v3.1h-17.9zM1537.6 402.9h17.9v3.1h-17.9zM1555.2 424.9h17.9v3.1h-17.9zM1572.7 431.1h17.9v3.1h-17.9zM1572.7 424.9h17.9v3.1h-17.9zM1590.3 424.9h17.9v3.1h-17.9zM1590.3 421.7h17.9v3.1h-17.9zM1643 431.1h17.9v3.1h-17.9zM1643 365.2h17.9v6.3h-17.9zM1695.7 402.9h17.9v9.4h-17.9zM1730.9 424.9h17.9v3.1h-17.9zM1748.4 362.1h17.9v9.4h-17.9zM1801.1 428h17.9v3.1h-17.9zM1853.8 453.1h17.9v3.1h-17.9zM1924.1 377.8h17.9v3.1h-17.9zM1976.8 428h17.9v6.3h-17.9zM2029.5 424.9h17.9v3.1h-17.9zM2082.2 424.9h17.9v3.1h-17.9zM2099.8 437.4h17.9v3.1h-17.9zM2152.5 421.7h17.9v3.1h-17.9zM2170.1 428h17.9v3.1h-17.9zM2205.2 415.4h17.9v9.4h-17.9zM2222.8 412.3h17.9v3.1h-17.9zM2257.9 428h17.9v3.1h-17.9zM2293.1 421.7h17.9v3.1h-17.9zM2328.2 424.9h17.9v3.1h-17.9zM2468.8 431.1h17.9v3.1h-17.9z"/><path fill="#2f2d47" d="M1073 390.3h8.1v3.1h-8.1zM1080.8 437.4h17.9v3.1h-17.9zM1080.8 428h17.9v3.1h-17.9zM1080.8 384h17.9v6.3h-17.9zM1098.4 406h17.9v9.4h-17.9zM1115.9 399.7h17.9v3.1h-17.9zM1133.5 431.1h17.9v3.1h-17.9zM1133.5 390.3h17.9v3.1h-17.9zM1151.1 468.8h17.9v3.1h-17.9zM1151.1 462.5h17.9v3.1h-17.9zM1168.6 465.7h17.9v3.1h-17.9zM1168.6 415.4h17.9v9.4h-17.9zM1186.2 428h17.9v3.1h-17.9zM1186.2 377.8h17.9v3.1h-17.9zM1203.8 437.4h17.9v3.1h-17.9zM1221.3 453.1h17.9v3.1h-17.9zM1221.3 428h17.9v3.1h-17.9zM1221.3 315h17.9v3.1h-17.9zM1256.5 468.8h17.9v3.1h-17.9zM1256.5 462.5h17.9v3.1h-17.9zM1256.5 415.4h17.9v6.3h-17.9zM1274 456.3h17.9v3.1h-17.9zM1274 428h17.9v3.1h-17.9zM1274 415.4h17.9v3.1h-17.9zM1274 393.5h17.9v9.4h-17.9zM1291.6 465.7h17.9v3.1h-17.9zM1291.6 456.3h17.9v3.1h-17.9zM1291.6 390.3h17.9v6.3h-17.9zM1309.2 431.1h17.9v3.1h-17.9zM1309.2 424.9h17.9v3.1h-17.9zM1309.2 415.4h17.9v3.1h-17.9zM1309.2 402.9h17.9v6.3h-17.9zM1326.8 421.7h17.9v3.1h-17.9zM1326.8 396.6h17.9v3.1h-17.9zM1361.9 424.9h17.9v3.1h-17.9zM1361.9 415.4h17.9v6.3h-17.9zM1379.5 434.3h17.9v9.4h-17.9zM1397 450h17.9v3.1h-17.9zM1397 437.4h17.9v3.1h-17.9zM1397 428h17.9v3.1h-17.9zM1414.6 406h17.9v9.4h-17.9zM1432.2 459.4h17.9v3.1h-17.9zM1432.2 431.1h17.9v3.1h-17.9zM1449.7 402.9h17.9v3.1h-17.9zM1449.7 393.5h17.9v6.3h-17.9zM1467.3 434.3h17.9v3.1h-17.9zM1467.3 415.4h17.9v6.3h-17.9zM1467.3 409.2h17.9v3.1h-17.9zM1484.9 406h17.9v3.1h-17.9zM1484.9 324.4h17.9v3.1h-17.9zM1502.5 453.1h17.9v3.1h-17.9zM1520 456.3h17.9v6.3h-17.9zM1520 450h17.9v3.1h-17.9zM1520 443.7h17.9v3.1h-17.9zM1520 440.6h17.9v3.1h-17.9zM1520 434.3h17.9v3.1h-17.9zM1520 409.2h17.9v6.3h-17.9zM1520 409.2h17.9v3.1h-17.9zM1520 399.7h17.9v3.1h-17.9zM1537.6 459.4h17.9v3.1h-17.9zM1555.2 453.1h17.9v3.1h-17.9zM1555.2 446.8h17.9v3.1h-17.9zM1555.2 406h17.9v3.1h-17.9zM1555.2 396.6h17.9v6.3h-17.9zM1572.7 440.6h17.9v3.1h-17.9zM1572.7 437.4h17.9v3.1h-17.9zM1572.7 321.2h17.9v9.4h-17.9zM1590.3 462.5h17.9v3.1h-17.9zM1590.3 437.4h17.9v6.3h-17.9zM1607.9 453.1h17.9v3.1h-17.9zM1607.9 412.3h17.9v3.1h-17.9zM1625.4 437.4h17.9v3.1h-17.9zM1625.4 393.5h17.9v6.3h-17.9zM1660.6 462.5h17.9v3.1h-17.9zM1660.6 377.8h17.9v3.1h-17.9zM1678.1 465.7h17.9v3.1h-17.9zM1678.1 409.2h17.9v9.4h-17.9zM1678.1 406h17.9v3.1h-17.9zM1695.7 450h17.9v3.1h-17.9zM1695.7 418.6h17.9v6.3h-17.9zM1713.3 465.7h17.9v6.3h-17.9zM1713.3 453.1h17.9v3.1h-17.9zM1713.3 434.3h17.9v3.1h-17.9zM1730.9 456.3h17.9v3.1h-17.9zM1730.9 453.1h17.9v3.1h-17.9zM1730.9 446.8h17.9v6.3h-17.9zM1730.9 446.8h17.9v3.1h-17.9zM1730.9 428h17.9v6.3h-17.9zM1730.9 412.3h17.9v3.1h-17.9zM1748.4 465.7h17.9v3.1h-17.9zM1748.4 456.3h17.9v6.3h-17.9zM1748.4 409.2h17.9v3.1h-17.9zM1766 443.7h17.9v3.1h-17.9zM1766 402.9h17.9v3.1h-17.9zM1783.6 459.4h17.9v3.1h-17.9zM1783.6 409.2h17.9v3.1h-17.9zM1801.1 450h17.9v3.1h-17.9zM1801.1 437.4h17.9v3.1h-17.9zM1801.1 396.6h17.9v3.1h-17.9zM1801.1 393.5h17.9v3.1h-17.9zM1801.1 368.3h17.9v3.1h-17.9zM1801.1 362.1h17.9v3.1h-17.9zM1818.7 453.1h17.9v3.1h-17.9zM1836.3 437.4h17.9v3.1h-17.9zM1853.8 446.8h17.9v6.3h-17.9zM1853.8 443.7h17.9v3.1h-17.9zM1853.8 428h17.9v9.4h-17.9zM1853.8 418.6h17.9v3.1h-17.9zM1871.4 459.4h17.9v3.1h-17.9zM1889 468.8h17.9v3.1h-17.9zM1889 459.4h17.9v9.4h-17.9zM1941.7 446.8h17.9v6.3h-17.9zM1941.7 258.4h17.9v6.3h-17.9zM1959.3 453.1h17.9v3.1h-17.9zM1959.3 402.9h17.9v3.1h-17.9zM1976.8 468.8h17.9v3.1h-17.9zM1976.8 459.4h17.9v9.4h-17.9zM1994.4 462.5h17.9v3.1h-17.9zM1994.4 418.6h17.9v3.1h-17.9zM1994.4 409.2h17.9v9.4h-17.9zM1994.4 365.2h17.9v6.3h-17.9zM2012 462.5h17.9v3.1h-17.9zM2012 424.9h17.9v3.1h-17.9zM2012 418.6h17.9v6.3h-17.9zM2012 365.2h17.9v3.1h-17.9zM2029.5 468.8h17.9v3.1h-17.9zM2029.5 465.7h17.9v3.1h-17.9zM2029.5 443.7h17.9v3.1h-17.9zM2047.1 465.7h17.9v3.1h-17.9zM2047.1 431.1h17.9v3.1h-17.9zM2064.7 462.5h17.9v3.1h-17.9zM2064.7 443.7h17.9v3.1h-17.9zM2064.7 434.3h17.9v3.1h-17.9zM2082.2 446.8h17.9v3.1h-17.9zM2082.2 409.2h17.9v3.1h-17.9zM2099.8 440.6h17.9v3.1h-17.9zM2099.8 362.1h17.9v9.4h-17.9zM2117.4 468.8h17.9v3.1h-17.9zM2117.4 428h17.9v3.1h-17.9zM2117.4 412.3h17.9v3.1h-17.9zM2117.4 362.1h17.9v3.1h-17.9zM2135 456.3h17.9v9.4h-17.9zM2135 456.3h17.9v3.1h-17.9zM2135 402.9h17.9v3.1h-17.9zM2135 399.7h17.9v3.1h-17.9zM2135 343.2h17.9v6.3h-17.9zM2152.5 465.7h17.9v3.1h-17.9zM2152.5 462.5h17.9v3.1h-17.9zM2170.1 462.5h17.9v3.1h-17.9zM2170.1 453.1h17.9v3.1h-17.9zM2170.1 380.9h17.9v9.4h-17.9zM2187.7 465.7h17.9v3.1h-17.9zM2187.7 453.1h17.9v3.1h-17.9zM2187.7 437.4h17.9v3.1h-17.9zM2187.7 434.3h17.9v3.1h-17.9zM2187.7 409.2h17.9v3.1h-17.9zM2205.2 440.6h17.9v3.1h-17.9zM2205.2 415.4h17.9v3.1h-17.9zM2205.2 390.3h17.9v6.3h-17.9zM2222.8 453.1h17.9v3.1h-17.9zM2222.8 443.7h17.9v3.1h-17.9zM2240.4 428h17.9v9.4h-17.9zM2257.9 468.8h17.9v3.1h-17.9zM2257.9 450h17.9v6.3h-17.9zM2257.9 415.4h17.9v3.1h-17.9zM2275.5 396.6h17.9v3.1h-17.9zM2293.1 437.4h17.9v9.4h-17.9zM2293.1 418.6h17.9v3.1h-17.9zM2310.6 431.1h17.9v6.3h-17.9zM2328.2 415.4h17.9v9.4h-17.9zM2345.8 462.5h17.9v9.4h-17.9zM2363.4 468.8h17.9v3.1h-17.9zM2363.4 437.4h17.9v3.1h-17.9zM2380.9 465.7h17.9v3.1h-17.9zM2380.9 446.8h17.9v3.1h-17.9zM2380.9 434.3h17.9v3.1h-17.9zM2398.5 437.4h17.9v9.4h-17.9zM2398.5 440.6h17.9v3.1h-17.9zM2398.5 434.3h17.9v3.1h-17.9zM2416.1 459.4h17.9v6.3h-17.9zM2416.1 434.3h17.9v3.1h-17.9zM2433.6 468.8h17.9v3.1h-17.9zM2433.6 431.1h17.9v3.1h-17.9zM2451.2 428h17.9v3.1h-17.9zM2451.2 380.9h17.9v3.1h-17.9zM2468.8 406h17.9v9.4h-17.9zM2468.8 402.9h17.9v3.1h-17.9zM2468.8 374.6h17.9v6.3h-17.9zM2486.3 431.1h17.9v3.1h-17.9z"/><path fill="#5bbb60" d="M1080.8 512.8h17.9v3.3h-17.9zM1133.5 512.8h17.9v3.3h-17.9zM1151.1 512.8h17.9v3.3h-17.9zM1168.6 512.8h17.9v3.3h-17.9zM1238.9 512.8h17.9v3.3h-17.9zM1309.2 512.8h17.9v3.3h-17.9zM1326.8 512.8h17.9v3.3h-17.9zM1344.3 512.8h17.9v3.3h-17.9zM1449.7 512.8h17.9v3.3h-17.9zM1467.3 512.8h17.9v3.3h-17.9zM1484.9 512.8h17.9v3.3h-17.9zM1502.5 512.8h17.9v3.3h-17.9zM1520 512.8h17.9v3.3h-17.9zM1537.6 512.8h17.9v3.3h-17.9zM1555.2 512.8h17.9v3.3h-17.9zM1572.7 512.8h17.9v3.3h-17.9zM1607.9 512.8h17.9v3.3h-17.9zM1625.4 512.8h17.9v3.3h-17.9zM1643 512.8h17.9v3.3h-17.9zM1678.1 512.8h17.9v3.3h-17.9zM1695.7 512.8h17.9v3.3h-17.9zM1730.9 512.8h17.9v3.3h-17.9zM1748.4 512.8h17.9v3.3h-17.9zM1766 512.8h17.9v3.3h-17.9zM1783.6 512.8h17.9v3.3h-17.9zM1801.1 512.8h17.9v3.3h-17.9zM1836.3 512.8h17.9v3.3h-17.9zM1871.4 512.8h17.9v3.3h-17.9zM1871.4 509.6h17.9v3.3h-17.9zM1889 512.8h17.9v3.3h-17.9zM1906.5 512.8h17.9v3.3h-17.9zM1924.1 512.8h17.9v3.3h-17.9zM1941.7 512.8h17.9v3.3h-17.9zM1959.3 512.8h17.9v3.3h-17.9zM1994.4 512.8h17.9v3.3h-17.9zM2012 512.8h17.9v3.3h-17.9zM2082.2 515.9h17.9v3.3h-17.9zM2082.2 512.8h17.9v3.3h-17.9zM2099.8 512.8h17.9v3.3h-17.9zM2152.5 512.8h17.9v3.3h-17.9zM2170.1 512.8h17.9v3.3h-17.9zM2187.7 512.8h17.9v3.3h-17.9zM2205.2 512.8h17.9v3.3h-17.9zM2222.8 509.6h17.9v3.3h-17.9zM2240.4 512.8h17.9v3.3h-17.9zM2363.4 512.8h17.9v3.3h-17.9zM2380.9 512.8h17.9v3.3h-17.9zM2398.5 512.8h17.9v3.3h-17.9zM2416.1 512.8h17.9v3.3h-17.9zM2433.6 512.8h17.9v3.3h-17.9zM2451.2 512.8h17.9v3.3h-17.9zM2468.8 512.8h17.9v3.3h-17.9z"/><path fill="#324d79" d="M1080.8 481.4h17.9v3.3h-17.9zM1098.4 481.4h17.9v3.3h-17.9zM1115.9 481.4h17.9v3.3h-17.9zM1115.9 478.2h17.9v3.3h-17.9zM1203.8 484.5h17.9v3.3h-17.9zM1221.3 487.7h17.9v3.3h-17.9zM1256.5 487.7h17.9v3.3h-17.9zM1274 478.2h17.9v3.3h-17.9zM1309.2 475.1h17.9v3.3h-17.9zM1326.8 481.4h17.9v3.3h-17.9zM1326.8 475.1h17.9v3.3h-17.9zM1379.5 481.4h17.9v3.3h-17.9zM1397 487.7h17.9v3.3h-17.9zM1432.2 481.4h17.9v3.3h-17.9zM1432.2 478.2h17.9v3.3h-17.9zM1449.7 481.4h17.9v3.3h-17.9zM1449.7 478.2h17.9v3.3h-17.9zM1467.3 478.2h17.9v3.3h-17.9zM1484.9 475.1h17.9v3.3h-17.9zM1520 475.1h17.9v3.3h-17.9zM1555.2 475.1h17.9v3.3h-17.9zM1572.7 475.1h17.9v3.3h-17.9zM1590.3 478.2h17.9v3.3h-17.9zM1678.1 478.2h17.9v3.3h-17.9zM1713.3 475.1h17.9v3.3h-17.9zM1783.6 475.1h17.9v3.3h-17.9zM1801.1 478.2h17.9v3.3h-17.9zM1801.1 475.1h17.9v3.3h-17.9zM1818.7 478.2h17.9v3.3h-17.9zM1818.7 475.1h17.9v3.3h-17.9zM1853.8 478.2h17.9v3.3h-17.9zM1889 475.1h17.9v3.3h-17.9zM1941.7 475.1h17.9v3.3h-17.9zM1976.8 475.1h17.9v3.3h-17.9zM2257.9 481.4h17.9v3.3h-17.9zM2363.4 478.2h17.9v3.3h-17.9zM2363.4 475.1h17.9v3.3h-17.9zM2380.9 478.2h17.9v3.3h-17.9zM2398.5 487.7h17.9v3.3h-17.9zM2398.5 478.2h17.9v3.3h-17.9zM2416.1 478.2h17.9v3.3h-17.9zM2486.3 481.4h17.9v3.3h-17.9zM2503.9 497.1h17.9v3.1h-17.9z"/><path fill="#33304b" d="M1080.8 468.8h17.9v3.1h-17.9zM1098.4 456.3h17.9v3.1h-17.9zM1115.9 446.8h17.9v3.1h-17.9zM1115.9 434.3h17.9v3.1h-17.9zM1133.5 428h17.9v3.1h-17.9zM1168.6 456.3h17.9v9.4h-17.9zM1168.6 406h17.9v3.1h-17.9zM1186.2 462.5h17.9v3.1h-17.9zM1186.2 450h17.9v3.1h-17.9zM1186.2 390.3h17.9v3.1h-17.9zM1203.8 459.4h17.9v3.1h-17.9zM1238.9 415.4h17.9v3.1h-17.9zM1256.5 459.4h17.9v3.1h-17.9zM1256.5 456.3h17.9v3.1h-17.9zM1309.2 468.8h17.9v3.1h-17.9zM1309.2 446.8h17.9v3.1h-17.9zM1309.2 415.4h17.9v6.3h-17.9zM1326.8 456.3h17.9v3.1h-17.9zM1344.3 456.3h17.9v3.1h-17.9zM1361.9 446.8h17.9v3.1h-17.9zM1379.5 450h17.9v3.1h-17.9zM1397 399.7h17.9v3.1h-17.9zM1414.6 462.5h17.9v3.1h-17.9zM1449.7 415.4h17.9v6.3h-17.9zM1449.7 415.4h17.9v3.1h-17.9zM1449.7 402.9h17.9v9.4h-17.9zM1484.9 462.5h17.9v6.3h-17.9zM1484.9 459.4h17.9v3.1h-17.9zM1484.9 443.7h17.9v3.1h-17.9zM1484.9 415.4h17.9v3.1h-17.9zM1502.5 384h17.9v3.1h-17.9zM1520 421.7h17.9v6.3h-17.9zM1520 390.3h17.9v9.4h-17.9zM1537.6 428h17.9v9.4h-17.9zM1555.2 428h17.9v3.1h-17.9zM1572.7 412.3h17.9v3.1h-17.9zM1590.3 421.7h17.9v9.4h-17.9zM1590.3 396.6h17.9v3.1h-17.9zM1590.3 368.3h17.9v3.1h-17.9zM1607.9 459.4h17.9v3.1h-17.9zM1607.9 434.3h17.9v9.4h-17.9zM1625.4 443.7h17.9v3.1h-17.9zM1625.4 434.3h17.9v3.1h-17.9zM1643 446.8h17.9v3.1h-17.9zM1678.1 456.3h17.9v9.4h-17.9zM1678.1 418.6h17.9v3.1h-17.9zM1695.7 462.5h17.9v3.1h-17.9zM1695.7 453.1h17.9v3.1h-17.9zM1695.7 412.3h17.9v3.1h-17.9zM1713.3 446.8h17.9v6.3h-17.9zM1713.3 431.1h17.9v3.1h-17.9zM1713.3 418.6h17.9v3.1h-17.9zM1748.4 406h17.9v3.1h-17.9zM1766 453.1h17.9v3.1h-17.9zM1783.6 396.6h17.9v3.1h-17.9zM1818.7 415.4h17.9v3.1h-17.9zM1818.7 406h17.9v3.1h-17.9zM1818.7 267.9h17.9v9.4h-17.9zM1836.3 462.5h17.9v3.1h-17.9zM1836.3 434.3h17.9v3.1h-17.9zM1836.3 371.5h17.9v3.1h-17.9zM1853.8 399.7h17.9v3.1h-17.9zM1889 371.5h17.9v3.1h-17.9zM1924.1 443.7h17.9v3.1h-17.9zM1941.7 421.7h17.9v3.1h-17.9zM1941.7 409.2h17.9v3.1h-17.9zM2012 450h17.9v9.4h-17.9zM2012 434.3h17.9v3.1h-17.9zM2029.5 453.1h17.9v3.1h-17.9zM2029.5 362.1h17.9v3.1h-17.9zM2047.1 453.1h17.9v3.1h-17.9zM2047.1 421.7h17.9v3.1h-17.9zM2047.1 330.7h17.9v9.4h-17.9zM2064.7 418.6h17.9v3.1h-17.9zM2082.2 459.4h17.9v3.1h-17.9zM2082.2 415.4h17.9v3.1h-17.9zM2082.2 393.5h17.9v9.4h-17.9zM2117.4 453.1h17.9v6.3h-17.9zM2117.4 443.7h17.9v6.3h-17.9zM2117.4 415.4h17.9v6.3h-17.9zM2135 261.6h17.9v6.3h-17.9zM2187.7 459.4h17.9v3.1h-17.9zM2187.7 424.9h17.9v9.4h-17.9zM2187.7 396.6h17.9v3.1h-17.9zM2187.7 387.2h17.9v3.1h-17.9zM2205.2 418.6h17.9v3.1h-17.9zM2205.2 399.7h17.9v3.1h-17.9zM2240.4 465.7h17.9v3.1h-17.9zM2293.1 424.9h17.9v3.1h-17.9zM2363.4 437.4h17.9v6.3h-17.9zM2380.9 468.8h17.9v3.1h-17.9zM2380.9 456.3h17.9v3.1h-17.9zM2398.5 450h17.9v3.1h-17.9zM2398.5 446.8h17.9v3.1h-17.9zM2433.6 446.8h17.9v3.1h-17.9zM2451.2 440.6h17.9v3.1h-17.9zM2451.2 418.6h17.9v3.1h-17.9zM2451.2 406h17.9v3.1h-17.9zM2468.8 446.8h17.9v9.4h-17.9zM2486.3 412.3h17.9v3.1h-17.9zM2486.3 406h17.9v3.1h-17.9zM2486.3 390.3h17.9v3.1h-17.9zM2486.3 327.5h17.9v3.1h-17.9zM2521.5 515.9h17.9v3.1h-17.9zM2521.5 512.8h17.9v3.1h-17.9zM2521.5 478.2h17.9v3.1h-17.9zM2609.3 509.6h17.9v3.1h-17.9zM2609.3 490.8h17.9v3.1h-17.9zM2679.6 515.9h17.9v3.1h-17.9zM2767.5 500.2h17.9v3.1h-17.9zM2943.1 515.9h17.9v3.1h-17.9zM2978.3 472h17.9v3.1h-17.9zM3013.4 512.8h17.9v3.1h-17.9zM3031 475.1h17.9v3.1h-17.9zM3066.1 487.7h17.9v3.1h-17.9zM3241.8 472h17.9v3.1h-17.9zM3277 503.4h17.9v3.1h-17.9zM3294.5 472h17.9v3.1h-17.9zM3522.9 481.4h17.9v3.1h-17.9zM3540.5 512.8h17.9v3.1h-17.9zM3558.1 490.8h17.9v3.1h-17.9z"/><path fill="#2e2547" d="M1098.4 487.7h17.9v3.3h-17.9zM1115.9 472h17.9v3.3h-17.9zM1133.5 478.2h17.9v3.3h-17.9zM1151.1 478.2h17.9v3.3h-17.9zM1168.6 484.5h17.9v3.3h-17.9zM1168.6 481.4h17.9v3.3h-17.9zM1186.2 472h17.9v3.3h-17.9zM1203.8 487.7h17.9v3.3h-17.9zM1203.8 472h17.9v3.3h-17.9zM1221.3 472h17.9v3.3h-17.9zM1256.5 484.5h17.9v3.3h-17.9zM1256.5 472h17.9v3.3h-17.9zM1291.6 484.5h17.9v3.3h-17.9zM1291.6 475.1h17.9v3.3h-17.9zM1361.9 481.4h17.9v3.3h-17.9zM1361.9 478.2h17.9v3.3h-17.9zM1379.5 487.7h17.9v3.3h-17.9zM1379.5 478.2h17.9v3.3h-17.9zM1397 472h17.9v3.3h-17.9zM1414.6 481.4h17.9v3.3h-17.9zM1414.6 475.1h17.9v3.3h-17.9zM1432.2 475.1h17.9v3.3h-17.9zM1467.3 481.4h17.9v3.3h-17.9zM1695.7 475.1h17.9v3.3h-17.9zM1766 472h17.9v3.3h-17.9zM1853.8 472h17.9v3.3h-17.9zM1941.7 487.7h17.9v3.3h-17.9zM2029.5 481.4h17.9v3.3h-17.9zM2029.5 475.1h17.9v3.3h-17.9zM2029.5 472h17.9v3.3h-17.9zM2117.4 472h17.9v3.3h-17.9zM2363.4 472h17.9v3.3h-17.9zM2503.9 475.1h17.9v3.1h-17.9zM2503.9 472h17.9v3.1h-17.9z"/><path fill="#38397a" d="M1098.4 478.2h17.9v3.3h-17.9zM1098.4 475.1h17.9v3.3h-17.9zM1115.9 475.1h17.9v3.3h-17.9zM1133.5 481.4h17.9v3.3h-17.9zM1168.6 478.2h17.9v3.3h-17.9zM1168.6 475.1h17.9v3.3h-17.9zM1186.2 478.2h17.9v3.3h-17.9zM1186.2 475.1h17.9v3.3h-17.9zM1221.3 475.1h17.9v3.3h-17.9zM1256.5 475.1h17.9v3.3h-17.9zM1274 475.1h17.9v3.3h-17.9zM1309.2 472h17.9v3.3h-17.9zM1361.9 475.1h17.9v3.3h-17.9zM1379.5 475.1h17.9v3.3h-17.9zM1414.6 472h17.9v3.3h-17.9zM1467.3 475.1h17.9v3.3h-17.9zM1484.9 472h17.9v3.3h-17.9zM1502.5 472h17.9v3.3h-17.9zM1555.2 472h17.9v3.3h-17.9zM1590.3 472h17.9v3.3h-17.9zM1607.9 472h17.9v3.3h-17.9zM1643 472h17.9v3.3h-17.9zM1660.6 472h17.9v3.3h-17.9zM1695.7 472h17.9v3.3h-17.9zM1801.1 472h17.9v3.3h-17.9zM1836.3 472h17.9v3.3h-17.9zM2099.8 475.1h17.9v3.3h-17.9zM2135 475.1h17.9v3.3h-17.9zM2152.5 475.1h17.9v3.3h-17.9zM2205.2 475.1h17.9v3.3h-17.9zM2257.9 475.1h17.9v3.3h-17.9zM2293.1 472h17.9v3.3h-17.9zM2328.2 475.1h17.9v3.3h-17.9zM2380.9 472h17.9v3.3h-17.9zM2416.1 475.1h17.9v3.3h-17.9zM2416.1 472h17.9v3.3h-17.9zM2433.6 475.1h17.9v3.3h-17.9zM2451.2 478.2h17.9v3.3h-17.9zM2486.3 478.2h17.9v3.3h-17.9zM2503.9 487.7h17.9v3.1h-17.9z"/><path fill="#2d2646" d="M1098.4 472h17.9v3.3h-17.9z"/><path fill="#2d6a7d" d="M1115.9 487.7h17.9v3.3h-17.9zM1115.9 484.5h17.9v3.3h-17.9zM1133.5 487.7h17.9v3.3h-17.9zM1168.6 490.8h17.9v3.3h-17.9zM1186.2 490.8h17.9v3.3h-17.9zM1203.8 493.9h17.9v3.3h-17.9zM1221.3 493.9h17.9v3.3h-17.9zM1238.9 484.5h17.9v3.3h-17.9zM1256.5 481.4h17.9v3.3h-17.9zM1274 484.5h17.9v3.3h-17.9zM1291.6 490.8h17.9v3.3h-17.9zM1291.6 481.4h17.9v3.3h-17.9zM1344.3 490.8h17.9v3.3h-17.9zM1379.5 484.5h17.9v3.3h-17.9zM1432.2 490.8h17.9v3.3h-17.9zM1467.3 490.8h17.9v3.3h-17.9zM1467.3 484.5h17.9v3.3h-17.9zM1555.2 481.4h17.9v3.3h-17.9zM1572.7 481.4h17.9v3.3h-17.9zM1607.9 481.4h17.9v3.3h-17.9zM1625.4 481.4h17.9v3.3h-17.9zM1643 484.5h17.9v3.3h-17.9zM1643 481.4h17.9v3.3h-17.9zM1678.1 481.4h17.9v3.3h-17.9zM1695.7 484.5h17.9v3.3h-17.9zM1730.9 484.5h17.9v3.3h-17.9zM1836.3 484.5h17.9v3.3h-17.9zM1836.3 481.4h17.9v3.3h-17.9zM1853.8 484.5h17.9v3.3h-17.9zM1871.4 481.4h17.9v3.3h-17.9zM1889 484.5h17.9v3.3h-17.9zM1906.5 484.5h17.9v3.3h-17.9zM1924.1 484.5h17.9v3.3h-17.9zM1924.1 481.4h17.9v3.3h-17.9zM1959.3 484.5h17.9v3.3h-17.9zM1976.8 484.5h17.9v3.3h-17.9zM1976.8 481.4h17.9v3.3h-17.9zM1994.4 484.5h17.9v3.3h-17.9zM1994.4 481.4h17.9v3.3h-17.9zM2012 484.5h17.9v3.3h-17.9zM2082.2 484.5h17.9v3.3h-17.9zM2099.8 481.4h17.9v3.3h-17.9zM2117.4 484.5h17.9v3.3h-17.9zM2152.5 478.2h17.9v3.3h-17.9zM2170.1 478.2h17.9v3.3h-17.9zM2187.7 484.5h17.9v3.3h-17.9zM2205.2 478.2h17.9v3.3h-17.9zM2222.8 478.2h17.9v3.3h-17.9zM2240.4 490.8h17.9v3.3h-17.9zM2240.4 487.7h17.9v3.3h-17.9zM2257.9 493.9h17.9v3.3h-17.9zM2275.5 487.7h17.9v3.3h-17.9zM2275.5 484.5h17.9v3.3h-17.9zM2293.1 493.9h17.9v3.3h-17.9zM2293.1 490.8h17.9v3.3h-17.9zM2293.1 487.7h17.9v3.3h-17.9zM2310.6 487.7h17.9v3.3h-17.9zM2310.6 484.5h17.9v3.3h-17.9zM2328.2 487.7h17.9v3.3h-17.9zM2328.2 481.4h17.9v3.3h-17.9zM2345.8 490.8h17.9v3.3h-17.9zM2345.8 487.7h17.9v3.3h-17.9zM2345.8 481.4h17.9v3.3h-17.9zM2363.4 487.7h17.9v3.3h-17.9zM2363.4 481.4h17.9v3.3h-17.9zM2380.9 487.7h17.9v3.3h-17.9zM2380.9 481.4h17.9v3.3h-17.9zM2398.5 490.8h17.9v3.3h-17.9zM2416.1 490.8h17.9v3.3h-17.9zM2451.2 481.4h17.9v3.3h-17.9zM2468.8 487.7h17.9v3.3h-17.9zM2468.8 484.5h17.9v3.3h-17.9zM2486.3 487.7h17.9v3.3h-17.9zM2503.9 509.6h17.9v3.1h-17.9zM2503.9 506.5h17.9v3.1h-17.9z"/><path fill="#45ae68" d="M1186.2 512.8h17.9v3.3h-17.9zM1203.8 512.8h17.9v3.3h-17.9zM1221.3 512.8h17.9v3.3h-17.9zM1555.2 509.6h17.9v3.3h-17.9zM1572.7 509.6h17.9v3.3h-17.9zM1590.3 512.8h17.9v3.3h-17.9zM1590.3 506.5h17.9v3.3h-17.9zM1625.4 509.6h17.9v3.3h-17.9zM1643 509.6h17.9v3.3h-17.9zM1660.6 512.8h17.9v3.3h-17.9zM1660.6 509.6h17.9v3.3h-17.9zM1678.1 509.6h17.9v3.3h-17.9zM1713.3 512.8h17.9v3.3h-17.9zM1818.7 509.6h17.9v3.3h-17.9zM1836.3 509.6h17.9v3.3h-17.9zM1889 509.6h17.9v3.3h-17.9zM1959.3 509.6h17.9v3.3h-17.9zM1959.3 497.1h17.9v3.3h-17.9zM2099.8 500.2h17.9v3.3h-17.9zM2117.4 512.8h17.9v3.3h-17.9zM2117.4 509.6h17.9v3.3h-17.9zM2117.4 500.2h17.9v3.3h-17.9zM2135 512.8h17.9v3.3h-17.9zM2135 509.6h17.9v3.3h-17.9zM2152.5 509.6h17.9v3.3h-17.9zM2205.2 500.2h17.9v3.3h-17.9zM2222.8 512.8h17.9v3.3h-17.9zM2257.9 512.8h17.9v3.3h-17.9zM2275.5 512.8h17.9v3.3h-17.9zM2293.1 512.8h17.9v3.3h-17.9zM2310.6 512.8h17.9v3.3h-17.9zM2328.2 512.8h17.9v3.3h-17.9zM2345.8 512.8h17.9v3.3h-17.9zM2486.3 512.8h17.9v3.3h-17.9z"/><path fill="#36a571" d="M1256.5 509.6h17.9v3.3h-17.9zM1326.8 509.6h17.9v3.3h-17.9zM1344.3 509.6h17.9v3.3h-17.9zM1484.9 509.6h17.9v3.3h-17.9zM1484.9 500.2h17.9v3.3h-17.9zM1502.5 509.6h17.9v3.3h-17.9zM1502.5 500.2h17.9v3.3h-17.9zM1520 500.2h17.9v3.3h-17.9zM1537.6 509.6h17.9v3.3h-17.9zM1537.6 500.2h17.9v3.3h-17.9zM1555.2 503.4h17.9v3.3h-17.9zM1555.2 497.1h17.9v3.3h-17.9zM1572.7 506.5h17.9v3.3h-17.9zM1572.7 503.4h17.9v3.3h-17.9zM1590.3 509.6h17.9v3.3h-17.9zM1590.3 503.4h17.9v3.3h-17.9zM1607.9 509.6h17.9v3.3h-17.9zM1607.9 503.4h17.9v3.3h-17.9zM1625.4 503.4h17.9v3.3h-17.9zM1625.4 497.1h17.9v3.3h-17.9zM1643 503.4h17.9v3.3h-17.9zM1643 497.1h17.9v3.3h-17.9zM1660.6 497.1h17.9v3.3h-17.9zM1678.1 506.5h17.9v3.3h-17.9zM1678.1 503.4h17.9v3.3h-17.9zM1678.1 497.1h17.9v3.3h-17.9zM1695.7 509.6h17.9v3.3h-17.9zM1695.7 503.4h17.9v3.3h-17.9zM1713.3 509.6h17.9v3.3h-17.9zM1713.3 500.2h17.9v3.3h-17.9zM1730.9 500.2h17.9v3.3h-17.9zM1730.9 497.1h17.9v3.3h-17.9zM1748.4 500.2h17.9v3.3h-17.9zM1766 506.5h17.9v3.3h-17.9zM1783.6 506.5h17.9v3.3h-17.9zM1783.6 497.1h17.9v3.3h-17.9zM1801.1 509.6h17.9v3.3h-17.9zM1801.1 500.2h17.9v3.3h-17.9zM1818.7 500.2h17.9v3.3h-17.9zM1836.3 503.4h17.9v3.3h-17.9zM1853.8 509.6h17.9v3.3h-17.9zM1853.8 500.2h17.9v3.3h-17.9zM1871.4 500.2h17.9v3.3h-17.9zM1889 506.5h17.9v3.3h-17.9zM1889 500.2h17.9v3.3h-17.9zM1889 497.1h17.9v3.3h-17.9zM1906.5 509.6h17.9v3.3h-17.9zM1906.5 497.1h17.9v3.3h-17.9zM1924.1 509.6h17.9v3.3h-17.9zM1924.1 503.4h17.9v3.3h-17.9zM1941.7 509.6h17.9v3.3h-17.9zM1941.7 503.4h17.9v3.3h-17.9zM1941.7 500.2h17.9v3.3h-17.9zM1941.7 497.1h17.9v3.3h-17.9zM1976.8 509.6h17.9v3.3h-17.9zM1976.8 503.4h17.9v3.3h-17.9zM1976.8 500.2h17.9v3.3h-17.9zM1994.4 509.6h17.9v3.3h-17.9zM1994.4 503.4h17.9v3.3h-17.9zM1994.4 500.2h17.9v3.3h-17.9zM2012 500.2h17.9v3.3h-17.9zM2029.5 509.6h17.9v3.3h-17.9zM2029.5 500.2h17.9v3.3h-17.9zM2047.1 509.6h17.9v3.3h-17.9zM2047.1 503.4h17.9v3.3h-17.9zM2047.1 497.1h17.9v3.3h-17.9zM2064.7 509.6h17.9v3.3h-17.9zM2064.7 503.4h17.9v3.3h-17.9zM2064.7 500.2h17.9v3.3h-17.9zM2064.7 497.1h17.9v3.3h-17.9zM2082.2 509.6h17.9v3.3h-17.9zM2082.2 500.2h17.9v3.3h-17.9zM2099.8 509.6h17.9v3.3h-17.9zM2117.4 493.9h17.9v3.3h-17.9zM2135 500.2h17.9v3.3h-17.9zM2152.5 500.2h17.9v3.3h-17.9zM2170.1 509.6h17.9v3.3h-17.9zM2170.1 503.4h17.9v3.3h-17.9zM2170.1 497.1h17.9v3.3h-17.9zM2187.7 509.6h17.9v3.3h-17.9zM2187.7 503.4h17.9v3.3h-17.9zM2205.2 509.6h17.9v3.3h-17.9zM2205.2 503.4h17.9v3.3h-17.9zM2222.8 500.2h17.9v3.3h-17.9zM2222.8 497.1h17.9v3.3h-17.9z"/><path fill="#e0df29" d="M1274 515.9h17.9v3.3h-17.9zM1361.9 515.9h17.9v3.3h-17.9z"/><path fill="#84c94c" d="M1274 512.8h17.9v3.3h-17.9zM1502.5 515.9h17.9v3.3h-17.9zM1555.2 515.9h17.9v3.3h-17.9zM1590.3 515.9h17.9v3.3h-17.9zM1625.4 515.9h17.9v3.3h-17.9zM1660.6 515.9h17.9v3.3h-17.9zM1678.1 515.9h17.9v3.3h-17.9zM1695.7 515.9h17.9v3.3h-17.9zM1836.3 515.9h17.9v3.3h-17.9zM1853.8 515.9h17.9v3.3h-17.9zM1906.5 515.9h17.9v3.3h-17.9zM2029.5 515.9h17.9v3.3h-17.9zM2047.1 515.9h17.9v3.3h-17.9zM2117.4 515.9h17.9v3.3h-17.9zM2135 515.9h17.9v3.3h-17.9z"/><path fill="#98ce40" d="M1643 515.9h17.9v3.3h-17.9zM1748.4 515.9h17.9v3.3h-17.9zM1766 515.9h17.9v3.3h-17.9zM1801.1 515.9h17.9v3.3h-17.9zM1818.7 515.9h17.9v3.3h-17.9zM1924.1 515.9h17.9v3.3h-17.9zM1941.7 515.9h17.9v3.3h-17.9zM1994.4 515.9h17.9v3.3h-17.9zM2012 515.9h17.9v3.3h-17.9zM2152.5 515.9h17.9v3.3h-17.9zM2170.1 515.9h17.9v3.3h-17.9zM2187.7 515.9h17.9v3.3h-17.9zM2222.8 515.9h17.9v3.3h-17.9zM2240.4 515.9h17.9v3.3h-17.9zM2275.5 515.9h17.9v3.3h-17.9zM2363.4 515.9h17.9v3.3h-17.9zM2416.1 515.9h17.9v3.3h-17.9zM2433.6 515.9h17.9v3.3h-17.9z"/><path fill="#c3d82d" d="M2293.1 515.9h17.9v3.3h-17.9zM2310.6 515.9h17.9v3.3h-17.9zM2328.2 515.9h17.9v3.3h-17.9zM2345.8 515.9h17.9v3.3h-17.9zM2468.8 515.9h17.9v3.3h-17.9zM2486.3 515.9h17.9v3.3h-17.9z"/><path fill="#f4df27" d="M2503.9 519.3h17.9v2.9h-17.9zM2521.5 519.3h17.9v2.9h-17.9zM2539 519.3h17.9v2.9h-17.9zM2556.6 519.3h17.9v2.9h-17.9zM2574.2 519.3h17.9v2.9h-17.9zM2591.8 519.3h17.9v2.9h-17.9zM2609.3 519.3h17.9v2.9h-17.9zM2626.9 519.3h17.9v2.9h-17.9zM2644.5 519.3h17.9v2.9h-17.9zM2662 519.3h17.9v2.9h-17.9zM2679.6 519.3h17.9v2.9h-17.9zM2697.2 519.3h17.9v2.9h-17.9zM2714.7 519.3h17.9v2.9h-17.9zM2732.3 519.3h17.9v2.9h-17.9zM2749.9 519.3h17.9v2.9h-17.9zM2767.5 519.3h17.9v2.9h-17.9zM2785 519.3h17.9v2.9h-17.9zM2802.6 519.3h17.9v2.9h-17.9zM2820.2 519.3h17.9v2.9h-17.9zM2837.7 519.3h17.9v2.9h-17.9zM2855.3 519.3h17.9v2.9h-17.9zM2872.9 519.3h17.9v2.9h-17.9zM2890.4 519.3h17.9v2.9h-17.9zM2908 519.3h17.9v2.9h-17.9zM2925.6 519.3h17.9v2.9h-17.9zM2943.1 519.3h17.9v2.9h-17.9zM2960.7 519.3h17.9v2.9h-17.9zM2978.3 519.3h17.9v2.9h-17.9zM2995.9 519.3h17.9v2.9h-17.9zM3013.4 519.3h17.9v2.9h-17.9zM3031 519.3h17.9v2.9h-17.9zM3048.6 519.3h17.9v2.9h-17.9zM3066.1 519.3h17.9v2.9h-17.9zM3083.7 519.3h17.9v2.9h-17.9zM3101.3 519.3h17.9v2.9h-17.9zM3118.8 519.3h17.9v2.9h-17.9zM3136.4 519.3h17.9v2.9h-17.9zM3154 519.3h17.9v2.9h-17.9zM3171.5 519.3h17.9v2.9h-17.9zM3189.1 519.3h17.9v2.9h-17.9zM3206.7 519.3h17.9v2.9h-17.9zM3224.3 519.3h17.9v2.9h-17.9zM3241.8 519.3h17.9v2.9h-17.9zM3259.4 519.3h17.9v2.9h-17.9zM3277 519.3h17.9v2.9h-17.9zM3294.5 519.3h17.9v2.9h-17.9zM3312.1 519.3h17.9v2.9h-17.9zM3329.7 519.3h17.9v2.9h-17.9zM3347.2 519.3h17.9v2.9h-17.9zM3364.8 519.3h17.9v2.9h-17.9zM3382.4 519.3h17.9v2.9h-17.9zM3400 519.3h17.9v2.9h-17.9zM3417.5 519.3h17.9v2.9h-17.9zM3435.1 519.3h17.9v2.9h-17.9zM3452.7 519.3h17.9v2.9h-17.9zM3470.2 519.3h17.9v2.9h-17.9zM3487.8 519.3h17.9v2.9h-17.9zM3505.4 519.3h17.9v2.9h-17.9zM3522.9 519.3h17.9v2.9h-17.9zM3540.5 519.3h17.9v2.9h-17.9zM3558.1 519.3h17.9v2.9h-17.9zM3575.6 519.3h17.9v2.9h-17.9zM3593.2 519.3h8.8v2.9h-8.8z"/><path fill="#2f2846" d="M2521.5 493.9h17.9v3.1h-17.9zM2539 481.4h17.9v3.1h-17.9zM2556.6 481.4h17.9v3.1h-17.9zM2574.2 515.9h17.9v3.1h-17.9zM2591.8 500.2h17.9v3.1h-17.9zM2591.8 478.2h17.9v3.1h-17.9zM2609.3 472h17.9v3.1h-17.9zM2626.9 493.9h17.9v3.1h-17.9zM2644.5 515.9h17.9v3.1h-17.9zM2662 472h17.9v3.1h-17.9zM2679.6 493.9h17.9v3.1h-17.9zM2714.7 515.9h17.9v3.1h-17.9zM2732.3 512.8h17.9v3.1h-17.9zM2732.3 503.4h17.9v3.1h-17.9zM2732.3 484.5h17.9v3.1h-17.9zM2749.9 515.9h17.9v3.1h-17.9zM2749.9 506.5h17.9v3.1h-17.9zM2749.9 493.9h17.9v3.1h-17.9zM2749.9 475.1h17.9v3.1h-17.9zM2749.9 472h17.9v3.1h-17.9zM2767.5 509.6h17.9v3.1h-17.9zM2767.5 503.4h17.9v3.1h-17.9zM2785 503.4h17.9v3.1h-17.9zM2785 475.1h17.9v3.1h-17.9zM2802.6 512.8h17.9v3.1h-17.9zM2820.2 515.9h17.9v3.1h-17.9zM2820.2 503.4h17.9v3.1h-17.9zM2820.2 500.2h17.9v3.1h-17.9zM2837.7 481.4h17.9v3.1h-17.9zM2855.3 490.8h17.9v3.1h-17.9zM2872.9 506.5h17.9v3.1h-17.9zM2890.4 478.2h17.9v3.1h-17.9zM2908 487.7h17.9v3.1h-17.9zM2925.6 484.5h17.9v3.1h-17.9zM2943.1 503.4h17.9v3.1h-17.9zM2943.1 497.1h17.9v3.1h-17.9zM2943.1 472h17.9v3.1h-17.9zM2960.7 484.5h17.9v3.1h-17.9zM2960.7 478.2h17.9v3.1h-17.9zM2978.3 503.4h17.9v3.1h-17.9zM2978.3 484.5h17.9v3.1h-17.9zM2995.9 497.1h17.9v3.1h-17.9zM2995.9 475.1h17.9v3.1h-17.9zM3031 490.8h17.9v3.1h-17.9zM3048.6 509.6h17.9v3.1h-17.9zM3048.6 487.7h17.9v3.1h-17.9zM3066.1 515.9h17.9v3.1h-17.9zM3066.1 503.4h17.9v3.1h-17.9zM3101.3 493.9h17.9v3.1h-17.9zM3118.8 484.5h17.9v3.1h-17.9zM3136.4 487.7h17.9v3.1h-17.9zM3154 497.1h17.9v3.1h-17.9zM3189.1 481.4h17.9v3.1h-17.9zM3224.3 515.9h17.9v3.1h-17.9zM3224.3 497.1h17.9v3.1h-17.9zM3224.3 481.4h17.9v3.1h-17.9zM3259.4 503.4h17.9v3.1h-17.9zM3259.4 478.2h17.9v3.1h-17.9zM3277 515.9h17.9v3.1h-17.9zM3277 490.8h17.9v3.1h-17.9zM3277 481.4h17.9v3.1h-17.9zM3294.5 515.9h17.9v3.1h-17.9zM3294.5 512.8h17.9v3.1h-17.9zM3294.5 497.1h17.9v3.1h-17.9zM3294.5 481.4h17.9v3.1h-17.9zM3347.2 503.4h17.9v3.1h-17.9zM3382.4 484.5h17.9v3.1h-17.9zM3417.5 497.1h17.9v3.1h-17.9zM3417.5 484.5h17.9v3.1h-17.9zM3417.5 478.2h17.9v3.1h-17.9zM3435.1 506.5h17.9v3.1h-17.9zM3435.1 487.7h17.9v3.1h-17.9zM3452.7 515.9h17.9v3.1h-17.9zM3470.2 493.9h17.9v3.1h-17.9zM3487.8 481.4h17.9v3.1h-17.9zM3505.4 509.6h17.9v3.1h-17.9zM3505.4 484.5h17.9v3.1h-17.9zM3505.4 472h17.9v3.1h-17.9zM3522.9 478.2h17.9v3.1h-17.9zM3540.5 506.5h17.9v3.1h-17.9zM3540.5 503.4h17.9v3.1h-17.9zM3540.5 500.2h17.9v3.1h-17.9zM3575.6 506.5h17.9v3.1h-17.9zM3575.6 484.5h17.9v3.1h-17.9z"/><path fill="#2c2642" d="M2591.8 475.1h17.9v3.1h-17.9zM2644.5 484.5h17.9v3.1h-17.9zM2662 500.2h17.9v3.1h-17.9zM2714.7 365.2h17.9v3.1h-17.9zM2785 515.9h17.9v3.1h-17.9zM2837.7 472h17.9v3.1h-17.9zM2890.4 515.9h17.9v3.1h-17.9zM2890.4 421.7h17.9v3.1h-17.9zM2908 515.9h17.9v3.1h-17.9zM2960.7 487.7h17.9v3.1h-17.9zM2995.9 503.4h17.9v3.1h-17.9zM3013.4 472h17.9v3.1h-17.9zM3031 318.1h17.9v3.1h-17.9zM3066.1 500.2h17.9v3.1h-17.9zM3083.7 478.2h17.9v3.1h-17.9zM3136.4 484.5h17.9v3.1h-17.9zM3136.4 481.4h17.9v3.1h-17.9zM3206.7 484.5h17.9v3.1h-17.9zM3206.7 478.2h17.9v3.1h-17.9zM3241.8 497.1h17.9v3.1h-17.9zM3241.8 267.9h17.9v3.1h-17.9zM3259.4 515.9h17.9v3.1h-17.9zM3259.4 484.5h17.9v3.1h-17.9zM3312.1 497.1h17.9v3.1h-17.9zM3329.7 509.6h17.9v3.1h-17.9zM3435.1 512.8h17.9v3.1h-17.9zM3522.9 484.5h17.9v3.1h-17.9zM3522.9 459.4h17.9v3.1h-17.9zM3540.5 484.5h17.9v3.1h-17.9zM3540.5 481.4h17.9v3.1h-17.9zM3593.2 296.1h8.8v3.1h-8.8z"/><path fill="#34497a" d="M2837.7 493.9h17.9v3.1h-17.9zM3031 515.9h17.9v3.1h-17.9zM3048.6 481.4h17.9v3.1h-17.9zM3224.3 503.4h17.9v3.1h-17.9zM3364.8 484.5h17.9v3.1h-17.9zM3487.8 512.8h17.9v3.1h-17.9zM3505.4 497.1h17.9v3.1h-17.9z"/><path fill="#315278" d="M3206.7 515.9h17.9v3.1h-17.9z"/><path d="M1080.8 472.5v49.5M1115.9 472.5v49.5M1151.1 472.5v49.5M1168.6 472.5v49.5M1186.2 472.5v49.5M1221.3 472.5v49.5M1256.5 472.5v49.5M1274.0 472.5v49.5M1291.6 472.5v49.5M1326.8 472.5v49.5M1361.9 472.5v49.5M1397.0 472.5v49.5M1432.2 472.5v49.5M1467.3 472.5v49.5M1484.9 472.5v49.5M1502.5 472.5v49.5M1537.6 472.5v49.5M1572.7 472.5v49.5M1590.3 472.5v49.5M1607.9 472.5v49.5M1643.0 472.5v49.5M1678.1 472.5v49.5M1713.3 472.5v49.5M1748.4 472.5v49.5M1783.6 472.5v49.5M1818.7 472.5v49.5M1836.3 472.5v49.5M1853.8 472.5v49.5M1889.0 472.5v49.5M1924.1 472.5v49.5M1959.3 472.5v49.5M1994.4 472.5v49.5M2029.5 472.5v49.5M2064.7 472.5v49.5M2099.8 472.5v49.5M2135.0 472.5v49.5M2170.1 472.5v49.5M2205.2 472.5v49.5M2240.4 472.5v49.5M2275.5 472.5v49.5M2310.6 472.5v49.5M2345.8 472.5v49.5M2380.9 472.5v49.5M2416.1 472.5v49.5M2451.2 472.5v49.5M2486.3 472.5v49.5M1096.6 490.3H2503.9M1077.3 506.6H2503.9" stroke="#10141a" stroke-opacity="0.6" stroke-width="1" fill="none"/><path d="M1072.0 246.7H3602.0M1072.0 338.7H3602.0M1072.0 431.7H3602.0M1072.0 524.0H3602.0M1177.4 238V523M1282.8 238V523M1388.3 238V523M1493.7 238V523M1599.1 238V523M1704.5 238V523M1809.9 238V523M1915.3 238V523M2020.8 238V523M2126.2 238V523M2231.6 238V523M2337.0 238V523M2442.4 238V523M2547.8 238V523M2653.3 238V523M2758.7 238V523M2864.1 238V523M2969.5 238V523M3074.9 238V523M3180.3 238V523M3285.8 238V523M3391.2 238V523M3496.6 238V523M3602.0 238V523" stroke="#40434c" stroke-opacity="0.3" stroke-width="2" stroke-dasharray="3 3" fill="none"/><path d="M1052 246.7H1071M1052 338.7H1071M1052 431.7H1071M1052 524.0H1071M1072.0 525V543M1177.4 525V543M1282.8 525V543M1388.3 525V543M1493.7 525V543M1599.1 525V543M1704.5 525V543M1809.9 525V543M1915.3 525V543M2020.8 525V543M2126.2 525V543M2231.6 525V543M2337.0 525V543M2442.4 525V543M2547.8 525V543M2653.3 525V543M2758.7 525V543M2864.1 525V543M2969.5 525V543M3074.9 525V543M3180.3 525V543M3285.8 525V543M3391.2 525V543M3496.6 525V543M3602.0 525V543" stroke="#15171d" stroke-width="2" fill="none"/><rect x="1071" y="238" width="2" height="286" fill="#7b7b7b"/><rect x="1073" y="393" width="1446.5" height="78" fill="none" stroke="#50ee7d" stroke-width="2"/></svg>
<div class="t m" style="top:236.71px;font-size:24px;color:#7e7e7e;right:2611.00px;">600</div>
<div class="t m" style="top:328.71px;font-size:24px;color:#7e7e7e;right:2611.00px;">400</div>
<div class="t m" style="top:421.71px;font-size:24px;color:#7e7e7e;right:2611.00px;">200</div>
<div class="t m" style="top:513.31px;font-size:24px;color:#7e7e7e;right:2611.00px;">0</div>
<div class="t m" style="top:554.21px;font-size:24px;color:#7e7e7e;left:1072.00px;transform:translateX(-50%);">10:00pm</div>
<div class="t m" style="top:554.21px;font-size:24px;color:#7e7e7e;left:1177.42px;transform:translateX(-50%);">10:30pm</div>
<div class="t m" style="top:554.21px;font-size:24px;color:#7e7e7e;left:1282.83px;transform:translateX(-50%);">11:00pm</div>
<div class="t m" style="top:554.21px;font-size:24px;color:#7e7e7e;left:1388.25px;transform:translateX(-50%);">11:30pm</div>
<div class="t m" style="top:554.21px;font-size:24px;color:#7e7e7e;left:1493.67px;transform:translateX(-50%);">12:00am</div>
<div class="t m" style="top:554.21px;font-size:24px;color:#7e7e7e;left:1599.09px;transform:translateX(-50%);">12:30am</div>
<div class="t m" style="top:554.21px;font-size:24px;color:#7e7e7e;left:1704.50px;transform:translateX(-50%);">1:00am</div>
<div class="t m" style="top:554.21px;font-size:24px;color:#7e7e7e;left:1809.92px;transform:translateX(-50%);">1:30am</div>
<div class="t m" style="top:554.21px;font-size:24px;color:#7e7e7e;left:1915.34px;transform:translateX(-50%);">2:00am</div>
<div class="t m" style="top:554.21px;font-size:24px;color:#7e7e7e;left:2020.75px;transform:translateX(-50%);">2:30am</div>
<div class="t m" style="top:554.21px;font-size:24px;color:#7e7e7e;left:2126.17px;transform:translateX(-50%);">3:00am</div>
<div class="t m" style="top:554.21px;font-size:24px;color:#7e7e7e;left:2231.59px;transform:translateX(-50%);">3:30am</div>
<div class="t m" style="top:554.21px;font-size:24px;color:#7e7e7e;left:2337.00px;transform:translateX(-50%);">4:00am</div>
<div class="t m" style="top:554.21px;font-size:24px;color:#7e7e7e;left:2442.42px;transform:translateX(-50%);">4:30am</div>
<div class="t m" style="top:554.21px;font-size:24px;color:#7e7e7e;left:2547.84px;transform:translateX(-50%);">5:00am</div>
<div class="t m" style="top:554.21px;font-size:24px;color:#7e7e7e;left:2653.26px;transform:translateX(-50%);">5:30am</div>
<div class="t m" style="top:554.21px;font-size:24px;color:#7e7e7e;left:2758.67px;transform:translateX(-50%);">6:00am</div>
<div class="t m" style="top:554.21px;font-size:24px;color:#7e7e7e;left:2864.09px;transform:translateX(-50%);">6:30am</div>
<div class="t m" style="top:554.21px;font-size:24px;color:#7e7e7e;left:2969.51px;transform:translateX(-50%);">7:00am</div>
<div class="t m" style="top:554.21px;font-size:24px;color:#7e7e7e;left:3074.92px;transform:translateX(-50%);">7:30am</div>
<div class="t m" style="top:554.21px;font-size:24px;color:#7e7e7e;left:3180.34px;transform:translateX(-50%);">8:00am</div>
<div class="t m" style="top:554.21px;font-size:24px;color:#7e7e7e;left:3285.76px;transform:translateX(-50%);">8:30am</div>
<div class="t m" style="top:554.21px;font-size:24px;color:#7e7e7e;left:3391.17px;transform:translateX(-50%);">9:00am</div>
<div class="t m" style="top:554.21px;font-size:24px;color:#7e7e7e;left:3496.59px;transform:translateX(-50%);">9:30am</div>
<div class="t m" style="top:554.21px;font-size:24px;color:#7e7e7e;left:3602.01px;transform:translateX(-50%);">10:00am</div>
<div class="t m" style="top:590.91px;font-size:24px;color:#7e7e7e;left:1021.60px;">9/14/25</div>
<div class="t m" style="top:590.91px;font-size:24px;color:#7e7e7e;left:1493.67px;transform:translateX(-50%);">9/15</div>
<div class="a" style="left:1073.00px;top:328.00px;width:309.00px;height:56.00px;background:rgba(26,27,38,0.92);border:2px solid #5b6070;border-radius:5px;"></div>
<div class="t m" style="top:346.91px;font-size:24px;color:#ffffff;left:1090.30px;">Filter by Selection</div>
<div class="a" style="left:3216.00px;top:624.00px;width:44.00px;height:44.00px;background:#212329;border:2px solid #2c2e35;border-radius:5px;"></div>
<svg class="a" style="left:3216px;top:624px" width="44" height="44" viewBox="0 0 44 44" fill="none" stroke="#5c5f66" stroke-width="2.6" stroke-linecap="round" stroke-linejoin="round"><polyline points="24.7,15.8 18.7,22 24.7,28.2"/></svg>
<div class="a" style="left:3276.00px;top:624.00px;width:44.00px;height:44.00px;background:#00c28a;border-radius:5px;"></div>
<div class="t s" style="top:633.63px;font-size:25px;color:#ffffff;left:3298.00px;transform:translateX(-50%);">1</div>
<div class="a" style="left:3336.00px;top:624.00px;width:44.00px;height:44.00px;background:#25262b;border:2px solid #373a40;border-radius:5px;"></div>
<div class="t s" style="top:633.63px;font-size:25px;color:#c9cace;left:3358.00px;transform:translateX(-50%);">2</div>
<div class="a" style="left:3396.00px;top:624.00px;width:44.00px;height:44.00px;background:#25262b;border:2px solid #373a40;border-radius:5px;"></div>
<div class="t s" style="top:633.63px;font-size:25px;color:#c9cace;left:3418.00px;transform:translateX(-50%);">3</div>
<div class="a" style="left:3456.00px;top:624.00px;width:44.00px;height:44.00px;background:#25262b;border:2px solid #373a40;border-radius:5px;"></div>
<div class="t s" style="top:633.63px;font-size:25px;color:#c9cace;left:3478.00px;transform:translateX(-50%);">4</div>
<div class="a" style="left:3516.00px;top:624.00px;width:44.00px;height:44.00px;background:#25262b;border:2px solid #373a40;border-radius:5px;"></div>
<div class="t s" style="top:633.63px;font-size:25px;color:#c9cace;left:3538.00px;transform:translateX(-50%);">5</div>
<div class="a" style="left:3576.00px;top:624.00px;width:44.00px;height:44.00px;background:#25262b;border:2px solid #373a40;border-radius:5px;"></div>
<svg class="a" style="left:3576px;top:624px" width="44" height="44" viewBox="0 0 44 44" fill="none" stroke="#c1c2c5" stroke-width="2.6" stroke-linecap="round" stroke-linejoin="round"><polyline points="19.3,15.8 25.3,22 19.3,28.2"/></svg>
<svg class="a" style="left:1072px;top:730.00px" width="600" height="204" viewBox="1072 730.00 600 204" shape-rendering="crispEdges"><rect x="1120.00" y="734.00" width="110.00" height="179.40" fill="#f5125a"/><rect x="1234.00" y="810.42" width="110.00" height="102.98" fill="#10dba0"/><rect x="1514.00" y="836.62" width="110.00" height="76.78" fill="#10dba0"/><path d="M1092 734.00V914.40M1080.5 913.40H1652.0M1080.5 734.50H1093M1080.5 823.70H1092M1080.5 868.55H1092M1512.00 913.40V925.40" stroke="#727272" stroke-width="2" fill="none" shape-rendering="geometricPrecision"/></svg>
<div class="t m" style="top:706.81px;font-size:24px;color:#adaeb8;left:1312.60px;transform:translateX(-50%);">ResourceAttributes.host.name</div>
<div class="t m" style="top:741.35px;font-size:22px;color:#767676;right:2575.90px;">100</div>
<div class="t m" style="top:815.95px;font-size:22px;color:#767676;right:2575.90px;">50</div>
<div class="t m" style="top:860.80px;font-size:22px;color:#767676;right:2575.90px;">25</div>
<div class="t m" style="top:905.65px;font-size:22px;color:#767676;right:2575.90px;">0</div>
<div class="t m" style="top:929.18px;font-size:20px;color:#767676;right:2000.50px;">payment-7985c8969c-mwmw7</div>
<svg class="a" style="left:1784px;top:730.00px" width="600" height="204" viewBox="1784 730.00 600 204" shape-rendering="crispEdges"><rect x="1832.00" y="734.00" width="110.00" height="179.40" fill="#f5125a"/><rect x="1946.00" y="810.42" width="110.00" height="102.98" fill="#10dba0"/><rect x="2226.00" y="836.62" width="110.00" height="76.78" fill="#10dba0"/><path d="M1804 734.00V914.40M1792.5 913.40H2364.0M1792.5 734.50H1805M1792.5 823.70H1804M1792.5 868.55H1804M2224.00 913.40V925.40" stroke="#727272" stroke-width="2" fill="none" shape-rendering="geometricPrecision"/></svg>
<div class="t m" style="top:706.81px;font-size:24px;color:#adaeb8;left:2024.60px;transform:translateX(-50%);">ResourceAttributes.k8s.pod.name</div>
<div class="t m" style="top:741.35px;font-size:22px;color:#767676;right:1863.90px;">100</div>
<div class="t m" style="top:815.95px;font-size:22px;color:#767676;right:1863.90px;">50</div>
<div class="t m" style="top:860.80px;font-size:22px;color:#767676;right:1863.90px;">25</div>
<div class="t m" style="top:905.65px;font-size:22px;color:#767676;right:1863.90px;">0</div>
<div class="t m" style="top:929.18px;font-size:20px;color:#767676;right:1288.50px;">payment-7985c8969c-mwmw7</div>
<svg class="a" style="left:2496px;top:730.00px" width="600" height="204" viewBox="2496 730.00 600 204" shape-rendering="crispEdges"><rect x="2544.00" y="734.00" width="110.00" height="179.40" fill="#f5125a"/><rect x="2658.00" y="810.42" width="110.00" height="102.98" fill="#10dba0"/><rect x="2938.00" y="836.62" width="110.00" height="76.78" fill="#10dba0"/><path d="M2516 734.00V914.40M2504.5 913.40H3076.0M2504.5 734.50H2517M2504.5 823.70H2516M2504.5 868.55H2516M2936.00 913.40V925.40" stroke="#727272" stroke-width="2" fill="none" shape-rendering="geometricPrecision"/></svg>
<div class="t m" style="top:706.81px;font-size:24px;color:#adaeb8;left:2736.60px;transform:translateX(-50%);">ResourceAttributes.k8s.pod.uid</div>
<div class="t m" style="top:741.35px;font-size:22px;color:#767676;right:1151.90px;">100</div>
<div class="t m" style="top:815.95px;font-size:22px;color:#767676;right:1151.90px;">50</div>
<div class="t m" style="top:860.80px;font-size:22px;color:#767676;right:1151.90px;">25</div>
<div class="t m" style="top:905.65px;font-size:22px;color:#767676;right:1151.90px;">0</div>
<div class="t m" style="top:929.18px;font-size:20px;color:#767676;right:576.50px;">5e02b5fb-13ae-4296-bbbc-111f423c460d</div>
<svg class="a" style="left:1072px;top:1002.10px" width="600" height="204" viewBox="1072 1002.10 600 204" shape-rendering="crispEdges"><rect x="1234.00" y="1108.72" width="110.00" height="76.78" fill="#10dba0"/><rect x="1400.00" y="1006.10" width="110.00" height="179.40" fill="#f5125a"/><rect x="1514.00" y="1082.52" width="110.00" height="102.98" fill="#10dba0"/><path d="M1092 1006.10V1186.50M1080.5 1185.50H1652.0M1080.5 1006.60H1093M1080.5 1095.80H1092M1080.5 1140.65H1092M1512.00 1185.50V1197.50" stroke="#727272" stroke-width="2" fill="none" shape-rendering="geometricPrecision"/></svg>
<div class="t m" style="top:978.91px;font-size:24px;color:#adaeb8;left:1312.60px;transform:translateX(-50%);">ResourceAttribu..ice.instance.id</div>
<div class="t m" style="top:1013.45px;font-size:22px;color:#767676;right:2575.90px;">100</div>
<div class="t m" style="top:1088.05px;font-size:22px;color:#767676;right:2575.90px;">50</div>
<div class="t m" style="top:1132.90px;font-size:22px;color:#767676;right:2575.90px;">25</div>
<div class="t m" style="top:1177.75px;font-size:22px;color:#767676;right:2575.90px;">0</div>
<div class="t m" style="top:1201.28px;font-size:20px;color:#767676;right:2000.50px;">f5344ec9-a1ea-4290-a62a-78f5bee8d90b</div>
<svg class="a" style="left:1784px;top:1002.10px" width="600" height="204" viewBox="1784 1002.10 600 204" shape-rendering="crispEdges"><rect x="1899.33" y="1159.31" width="72.67" height="26.19" fill="#10dba0"/><rect x="2009.33" y="1166.84" width="72.67" height="18.66" fill="#f5125a"/><rect x="2086.00" y="1125.94" width="72.67" height="59.56" fill="#10dba0"/><rect x="2196.00" y="1023.50" width="72.67" height="162.00" fill="#f5125a"/><rect x="2272.67" y="1090.60" width="72.67" height="94.90" fill="#10dba0"/><path d="M1804 1006.10V1186.50M1792.5 1185.50H2364.0M1792.5 1006.60H1805M1792.5 1095.80H1804M1792.5 1140.65H1804M2270.67 1185.50V1197.50" stroke="#727272" stroke-width="2" fill="none" shape-rendering="geometricPrecision"/></svg>
<div class="t m" style="top:978.91px;font-size:24px;color:#adaeb8;left:2024.60px;transform:translateX(-50%);">SpanName</div>
<div class="t m" style="top:1013.45px;font-size:22px;color:#767676;right:1863.90px;">100</div>
<div class="t m" style="top:1088.05px;font-size:22px;color:#767676;right:1863.90px;">50</div>
<div class="t m" style="top:1132.90px;font-size:22px;color:#767676;right:1863.90px;">25</div>
<div class="t m" style="top:1177.75px;font-size:22px;color:#767676;right:1863.90px;">0</div>
<div class="t m" style="top:1201.28px;font-size:20px;color:#767676;right:1288.50px;">grpc.oteldemo.PaymentService/Charge</div>
<svg class="a" style="left:2496px;top:1002.10px" width="600" height="204" viewBox="2496 1002.10 600 204" shape-rendering="crispEdges"><rect x="2544.00" y="1166.84" width="110.00" height="18.66" fill="#f5125a"/><rect x="2658.00" y="1099.93" width="110.00" height="85.57" fill="#10dba0"/><rect x="2824.00" y="1023.50" width="110.00" height="162.00" fill="#f5125a"/><rect x="2938.00" y="1090.60" width="110.00" height="94.90" fill="#10dba0"/><path d="M2516 1006.10V1186.50M2504.5 1185.50H3076.0M2504.5 1006.60H2517M2504.5 1095.80H2516M2504.5 1140.65H2516M2656.00 1185.50V1197.50M2936.00 1185.50V1197.50" stroke="#727272" stroke-width="2" fill="none" shape-rendering="geometricPrecision"/></svg>
<div class="t m" style="top:978.91px;font-size:24px;color:#adaeb8;left:2736.60px;transform:translateX(-50%);">SpanKind</div>
<div class="t m" style="top:1013.45px;font-size:22px;color:#767676;right:1151.90px;">100</div>
<div class="t m" style="top:1088.05px;font-size:22px;color:#767676;right:1151.90px;">50</div>
<div class="t m" style="top:1132.90px;font-size:22px;color:#767676;right:1151.90px;">25</div>
<div class="t m" style="top:1177.75px;font-size:22px;color:#767676;right:1151.90px;">0</div>
<div class="t m" style="top:1201.28px;font-size:20px;color:#767676;left:2656.00px;transform:translateX(-50%);">Internal</div>
<div class="t m" style="top:1201.28px;font-size:20px;color:#767676;left:2936.00px;transform:translateX(-50%);">Server</div>
<svg class="a" style="left:1072px;top:1274.20px" width="600" height="204" viewBox="1072 1274.20 600 204" shape-rendering="crispEdges"><rect x="1187.33" y="1431.41" width="72.67" height="26.19" fill="#10dba0"/><rect x="1297.33" y="1295.60" width="72.67" height="162.00" fill="#f5125a"/><rect x="1374.00" y="1362.70" width="72.67" height="94.90" fill="#10dba0"/><rect x="1484.00" y="1438.94" width="72.67" height="18.66" fill="#f5125a"/><rect x="1560.67" y="1398.04" width="72.67" height="59.56" fill="#10dba0"/><path d="M1092 1278.20V1458.60M1080.5 1457.60H1652.0M1080.5 1278.70H1093M1080.5 1367.90H1092M1080.5 1412.75H1092M1185.33 1457.60V1469.60M1558.67 1457.60V1469.60" stroke="#727272" stroke-width="2" fill="none" shape-rendering="geometricPrecision"/></svg>
<div class="t m" style="top:1251.01px;font-size:24px;color:#adaeb8;left:1312.60px;transform:translateX(-50%);">ScopeName</div>
<div class="t m" style="top:1285.55px;font-size:22px;color:#767676;right:2575.90px;">100</div>
<div class="t m" style="top:1360.15px;font-size:22px;color:#767676;right:2575.90px;">50</div>
<div class="t m" style="top:1405.00px;font-size:22px;color:#767676;right:2575.90px;">25</div>
<div class="t m" style="top:1449.85px;font-size:22px;color:#767676;right:2575.90px;">0</div>
<div class="t m" style="top:1473.38px;font-size:20px;color:#767676;left:1185.33px;transform:translateX(-50%);">@hyperdx/instrumentation-exception</div>
<div class="t m" style="top:1473.38px;font-size:20px;color:#767676;left:1558.67px;transform:translateX(-50%);">payment</div>
<svg class="a" style="left:1784px;top:1274.20px" width="600" height="204" viewBox="1784 1274.20 600 204" shape-rendering="crispEdges"><rect x="1822.67" y="1438.94" width="72.67" height="18.66" fill="#f5125a"/><rect x="1899.33" y="1398.04" width="72.67" height="59.56" fill="#10dba0"/><rect x="2086.00" y="1431.41" width="72.67" height="26.19" fill="#10dba0"/><rect x="2196.00" y="1295.60" width="72.67" height="162.00" fill="#f5125a"/><rect x="2272.67" y="1362.70" width="72.67" height="94.90" fill="#10dba0"/><path d="M1804 1278.20V1458.60M1792.5 1457.60H2364.0M1792.5 1278.70H1805M1792.5 1367.90H1804M1792.5 1412.75H1804M1897.33 1457.60V1469.60M2084.00 1457.60V1469.60M2270.67 1457.60V1469.60" stroke="#727272" stroke-width="2" fill="none" shape-rendering="geometricPrecision"/></svg>
<div class="t m" style="top:1251.01px;font-size:24px;color:#adaeb8;left:2024.60px;transform:translateX(-50%);">ScopeVersion</div>
<div class="t m" style="top:1285.55px;font-size:22px;color:#767676;right:1863.90px;">100</div>
<div class="t m" style="top:1360.15px;font-size:22px;color:#767676;right:1863.90px;">50</div>
<div class="t m" style="top:1405.00px;font-size:22px;color:#767676;right:1863.90px;">25</div>
<div class="t m" style="top:1449.85px;font-size:22px;color:#767676;right:1863.90px;">0</div>
<div class="t m" style="top:1473.38px;font-size:20px;color:#767676;left:2084.00px;transform:translateX(-50%);">0.1.0</div>
<div class="t m" style="top:1473.38px;font-size:20px;color:#767676;left:2270.67px;transform:translateX(-50%);">0.51.1</div>
<svg class="a" style="left:2496px;top:1274.20px" width="600" height="204" viewBox="2496 1274.20 600 204" shape-rendering="crispEdges"><rect x="2796.00" y="1278.20" width="280.00" height="179.40" fill="#3e3f46"/><rect x="2658.00" y="1405.04" width="110.00" height="52.56" fill="#10dba0"/><rect x="2824.00" y="1278.20" width="110.00" height="179.40" fill="#f5125a"/><rect x="2938.00" y="1330.23" width="110.00" height="127.37" fill="#10dba0"/><path d="M2516 1278.20V1458.60M2504.5 1457.60H3076.0M2504.5 1278.70H2517M2504.5 1367.90H2516M2504.5 1412.75H2516M2656.00 1457.60V1469.60M2936.00 1457.60V1469.60" stroke="#727272" stroke-width="2" fill="none" shape-rendering="geometricPrecision"/></svg>
<div class="t m" style="top:1251.01px;font-size:24px;color:#adaeb8;left:2736.60px;transform:translateX(-50%);">SpanAttributes...yment.card_type</div>
<div class="t m" style="top:1285.55px;font-size:22px;color:#767676;right:1151.90px;">100</div>
<div class="t m" style="top:1360.15px;font-size:22px;color:#767676;right:1151.90px;">50</div>
<div class="t m" style="top:1405.00px;font-size:22px;color:#767676;right:1151.90px;">25</div>
<div class="t m" style="top:1449.85px;font-size:22px;color:#767676;right:1151.90px;">0</div>
<svg class="a" style="left:1072px;top:1546.30px" width="600" height="204" viewBox="1072 1546.30 600 204" shape-rendering="crispEdges"><rect x="1234.00" y="1703.87" width="110.00" height="25.83" fill="#10dba0"/><rect x="1400.00" y="1550.30" width="110.00" height="179.40" fill="#f5125a"/><rect x="1514.00" y="1575.60" width="110.00" height="154.10" fill="#10dba0"/><path d="M1092 1550.30V1730.70M1080.5 1729.70H1652.0M1080.5 1550.80H1093M1080.5 1640.00H1092M1080.5 1684.85H1092M1232.00 1729.70V1741.70M1512.00 1729.70V1741.70" stroke="#727272" stroke-width="2" fill="none" shape-rendering="geometricPrecision"/></svg>
<div class="t m" style="top:1523.11px;font-size:24px;color:#adaeb8;left:1312.60px;transform:translateX(-50%);">StatusCode</div>
<div class="t m" style="top:1557.65px;font-size:22px;color:#767676;right:2575.90px;">100</div>
<div class="t m" style="top:1632.25px;font-size:22px;color:#767676;right:2575.90px;">50</div>
<div class="t m" style="top:1677.10px;font-size:22px;color:#767676;right:2575.90px;">25</div>
<div class="t m" style="top:1721.95px;font-size:22px;color:#767676;right:2575.90px;">0</div>
<div class="t m" style="top:1745.48px;font-size:20px;color:#767676;left:1232.00px;transform:translateX(-50%);">Error</div>
<div class="t m" style="top:1745.48px;font-size:20px;color:#767676;left:1512.00px;transform:translateX(-50%);">Unset</div>
<svg class="a" style="left:1784px;top:1546.30px" width="600" height="204" viewBox="1784 1546.30 600 204" shape-rendering="crispEdges"><path d="M1804 1550.30V1730.70M1792.5 1729.70H2364.0M1792.5 1550.80H1805M1792.5 1640.00H1804M1792.5 1684.85H1804M1850.40 1729.70V1741.70M1945.10 1729.70V1741.70M2038.90 1729.70V1741.70M2145.70 1729.70V1741.70M2245.70 1729.70V1741.70M2363.40 1729.70V1741.70" stroke="#727272" stroke-width="2" fill="none" shape-rendering="geometricPrecision"/></svg>
<div class="t m" style="top:1523.11px;font-size:24px;color:#adaeb8;left:2024.60px;transform:translateX(-50%);">Duration</div>
<div class="t m" style="top:1557.65px;font-size:22px;color:#767676;right:1863.90px;">16</div>
<div class="t m" style="top:1632.25px;font-size:22px;color:#767676;right:1863.90px;">8</div>
<div class="t m" style="top:1677.10px;font-size:22px;color:#767676;right:1863.90px;">4</div>
<div class="t m" style="top:1721.95px;font-size:22px;color:#767676;right:1863.90px;">0</div>
<div class="t m" style="top:1745.48px;font-size:20px;color:#767676;left:1850.40px;transform:translateX(-50%);">1141978</div>
<div class="t m" style="top:1745.48px;font-size:20px;color:#767676;left:1945.10px;transform:translateX(-50%);">1386792</div>
<div class="t m" style="top:1745.48px;font-size:20px;color:#767676;left:2038.90px;transform:translateX(-50%);">1600267</div>
<div class="t m" style="top:1745.48px;font-size:20px;color:#767676;left:2145.70px;transform:translateX(-50%);">200027900</div>
<div class="t m" style="top:1745.48px;font-size:20px;color:#767676;left:2245.70px;transform:translateX(-50%);">584623</div>
<div class="t m" style="top:1745.48px;font-size:20px;color:#767676;right:1288.50px;">999356</div>
<svg class="a" style="left:1804px;top:1726.70px" width="562" height="4" viewBox="0 0 562 4" shape-rendering="crispEdges"><rect x="1" y="1.6" width="560" height="1.4" fill="#3f9f86"/><path d="M36 2.3H416" stroke="#9a3a55" stroke-width="1.4" stroke-dasharray="7 5 3 6 9 4"/></svg>
<svg class="a" style="left:2496px;top:1546.30px" width="600" height="204" viewBox="2496 1546.30 600 204" shape-rendering="crispEdges"><rect x="2530.00" y="1566.32" width="54.00" height="163.38" fill="#f5125a"/><rect x="2588.00" y="1559.91" width="54.00" height="169.79" fill="#10dba0"/><rect x="2670.00" y="1574.65" width="54.00" height="155.05" fill="#f5125a"/><rect x="2728.00" y="1552.86" width="54.00" height="176.84" fill="#10dba0"/><rect x="2810.00" y="1551.58" width="54.00" height="178.12" fill="#f5125a"/><rect x="2868.00" y="1584.90" width="54.00" height="144.80" fill="#10dba0"/><rect x="2950.00" y="1586.18" width="54.00" height="143.52" fill="#f5125a"/><rect x="3008.00" y="1564.40" width="54.00" height="165.30" fill="#10dba0"/><path d="M2516 1550.30V1730.70M2504.5 1729.70H3076.0M2504.5 1550.80H2517M2504.5 1640.00H2516M2504.5 1684.85H2516M2586.00 1729.70V1741.70M2726.00 1729.70V1741.70M2866.00 1729.70V1741.70M3006.00 1729.70V1741.70" stroke="#727272" stroke-width="2" fill="none" shape-rendering="geometricPrecision"/></svg>
<div class="t m" style="top:1523.11px;font-size:24px;color:#adaeb8;left:2736.60px;transform:translateX(-50%);">SpanAttributes.app.loyalty.level</div>
<div class="t m" style="top:1557.65px;font-size:22px;color:#767676;right:1151.90px;">28</div>
<div class="t m" style="top:1632.25px;font-size:22px;color:#767676;right:1151.90px;">14</div>
<div class="t m" style="top:1677.10px;font-size:22px;color:#767676;right:1151.90px;">7</div>
<div class="t m" style="top:1721.95px;font-size:22px;color:#767676;right:1151.90px;">0</div>
<div class="t m" style="top:1745.48px;font-size:20px;color:#767676;left:2586.00px;transform:translateX(-50%);">bronze</div>
<div class="t m" style="top:1745.48px;font-size:20px;color:#767676;left:2726.00px;transform:translateX(-50%);">gold</div>
<div class="t m" style="top:1745.48px;font-size:20px;color:#767676;left:2866.00px;transform:translateX(-50%);">platinum</div>
<div class="t m" style="top:1745.48px;font-size:20px;color:#767676;left:3006.00px;transform:translateX(-50%);">silver</div>
<div class="a" style="left:2517px;top:1465px;width:570px;height:199.5px;border:2px solid #5b6272;border-radius:5px;background:rgba(26,28,36,0.78);-webkit-backdrop-filter:blur(14px);backdrop-filter:blur(14px)"></div>
<div class="t m" style="top:1484.81px;font-size:24px;color:#a6a7b0;left:2543.00px;">SpanAttributes.app.payment.card_type</div>
<div class="t m" style="top:1537.51px;font-size:24px;color:#ffffff;left:2543.00px;">visa</div>
<div class="t m" style="top:1592.85px;font-size:22px;color:#ffffff;left:2543.00px;">Outliers: 100.00%</div>
<div class="t m" style="top:1626.25px;font-size:22px;color:#ffffff;left:2543.00px;">Inliers: 70.83%</div>
</div></div></body></html>
